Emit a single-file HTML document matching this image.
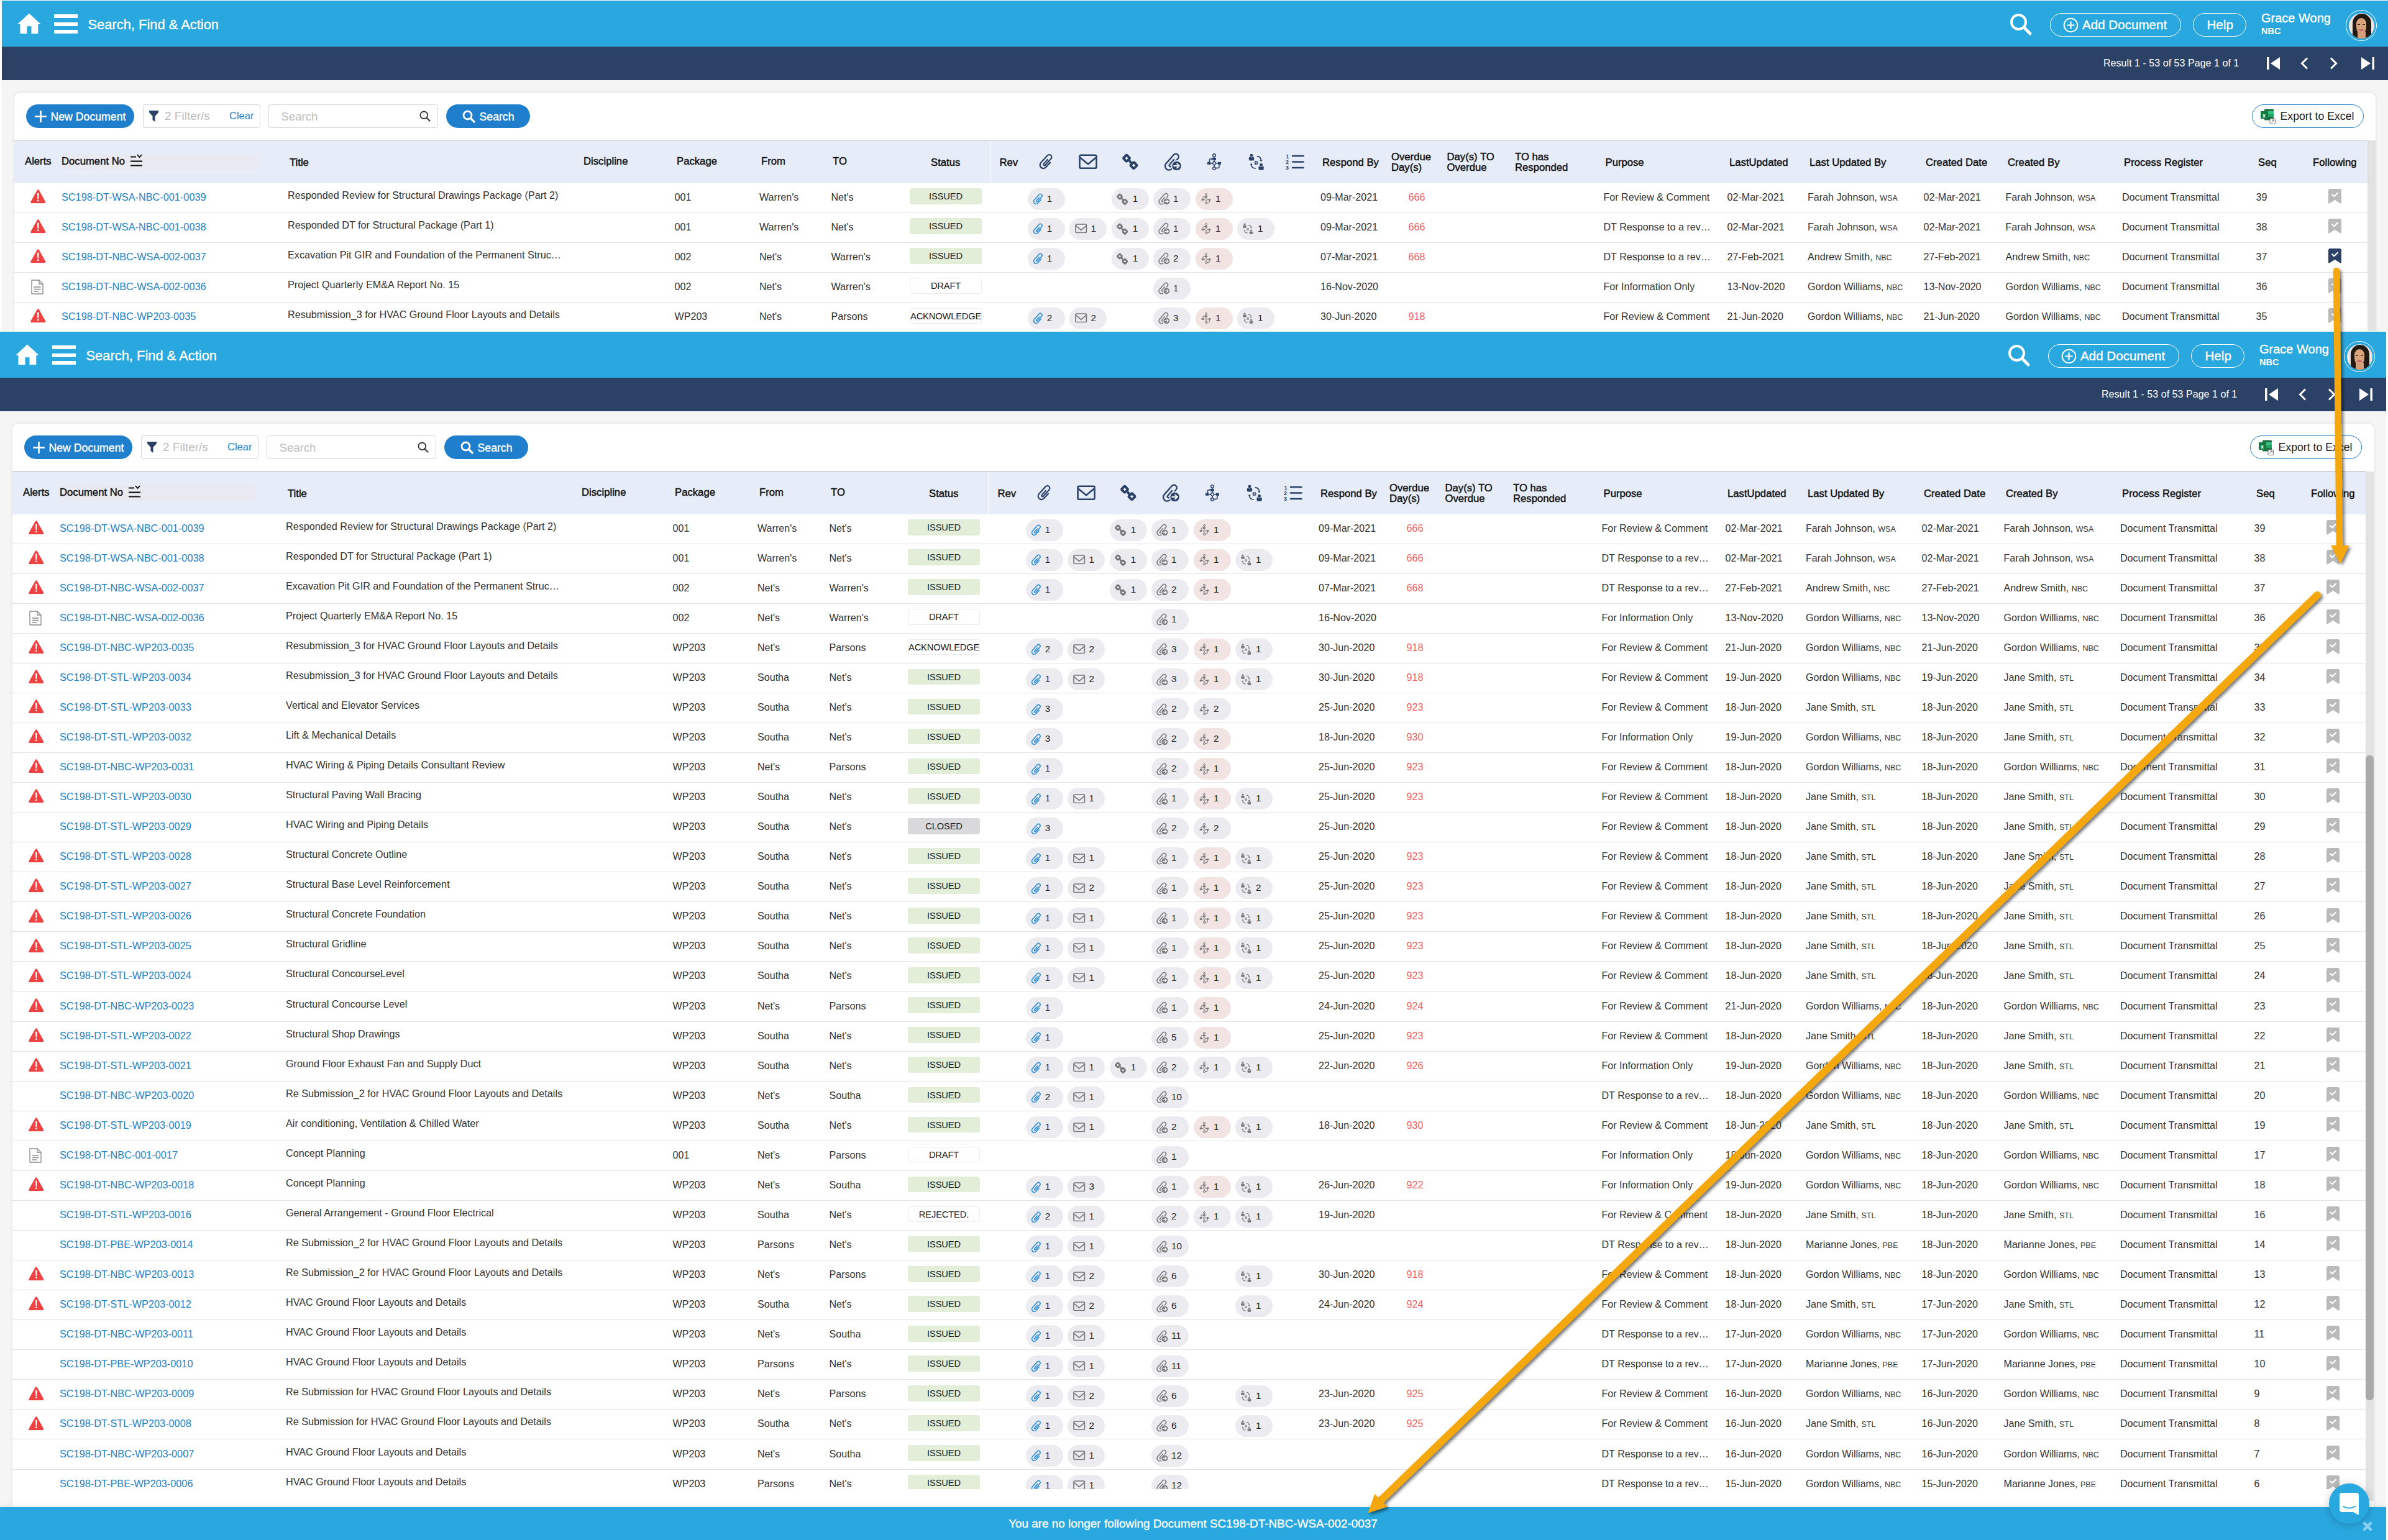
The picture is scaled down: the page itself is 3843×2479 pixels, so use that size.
<!DOCTYPE html>
<html><head><meta charset="utf-8"><title>Search, Find &amp; Action</title>
<style>
*{box-sizing:border-box}
html,body{margin:0;padding:0}
body{width:3843px;height:2479px;overflow:hidden;position:relative;background:#fff;font-family:"Liberation Sans", sans-serif;color:#333}
.scr{position:absolute;overflow:hidden;background:#F5F5F5;width:3840px}
.scr div,.scr span,.scr svg{position:absolute}
.scr svg{overflow:visible}
.t{white-space:nowrap}
.md{-webkit-text-stroke:0.35px currentColor}
.hdr{left:0;top:1px;width:3840px;height:74px;background:#29A8E0}
.nav{left:0;top:75px;width:3840px;height:54px;background:#2B4166}
.card{left:20px;top:149px;width:3800px;height:3000px;background:#fff;border-radius:9px;box-shadow:0 0 5px rgba(0,0,0,.10)}
.th{left:20px;top:225px;width:3787px;height:70px;background:#E6EDF9;border-top:1px solid #BDBDC4}
.hl{font-size:16.7px;font-weight:400;color:#111;line-height:17px;-webkit-text-stroke:0.45px #111}
.row{left:20px;width:3787px;height:48px;border-bottom:1px solid #E4E4E6;background:#fff}
.c{font-size:16.1px;line-height:20px;color:#333;white-space:nowrap}
.ti{font-size:16.2px}
.dn{color:#1E82C8;font-size:16.3px}
.org{font-size:12.5px}
.od{color:#F26262}
.st{width:116px;height:25.6px;border-radius:3.5px;font-size:14.7px;line-height:26px;text-align:center;color:#1a1a1a;letter-spacing:-0.15px}
.iss{background:#E2EED8}
.dr{background:#fff;border:1px solid #EBEBEB;line-height:24px}
.cl{background:#D9D9DC}
.pill{width:60px;height:35px;border-radius:17.5px;background:#EBEBF0}
.pk{background:#F3E4E4}
.pill svg{left:8px;top:8.5px;width:18px;height:18px;color:#777}
.pill .n{left:31.5px;top:7px;font-size:15.2px;line-height:20px;color:#222}
.hi{color:#2B4268}
</style></head><body>

<svg width="0" height="0" style="position:absolute">
<defs>
<symbol id="clip" viewBox="-11 -12.5 22 25" overflow="visible"><g transform="rotate(42)" fill="none" stroke="currentColor" stroke-width="2.2" stroke-linecap="round" stroke-linejoin="round"><path d="M5.8 -2.3 L5.8 7.9 A5.4 5.4 0 0 1 -5 7.9 L-5 -7.9 A3.9 3.9 0 0 1 2.8 -7.9 L2.8 5.9 A1.6 1.6 0 0 1 -0.4 5.9 L-0.4 -3"/></g></symbol>
<symbol id="mail" viewBox="0 0 30 24"><g fill="none" stroke="currentColor" stroke-width="2.6" stroke-linejoin="round"><rect x="1.5" y="1.5" width="27" height="21" rx="2"/><polyline points="2.5,5.5 15,16 27.5,5.5"/></g></symbol>
<symbol id="link" viewBox="0 0 25 25" overflow="visible"><g fill="currentColor"><rect x="1.2" y="1.9" width="11.6" height="11.6" rx="3.6" transform="rotate(45 7 7.7)"/><rect x="12.7" y="13.4" width="11.6" height="11.6" rx="3.6" transform="rotate(45 18.5 19.2)"/><path d="M10 12.8 L12.8 10 L15.8 14.2 L13 17 Z"/></g><g fill="#fff"><rect x="5.25" y="5.95" width="3.5" height="3.5" transform="rotate(45 7 7.7)"/><rect x="16.75" y="17.45" width="3.5" height="3.5" transform="rotate(45 18.5 19.2)"/></g></symbol>
<symbol id="aa" viewBox="0 0 27 27" overflow="visible"><mask id="aam" maskUnits="userSpaceOnUse" x="-5" y="-5" width="40" height="40"><rect x="-5" y="-5" width="40" height="40" fill="#fff"/><circle cx="20.1" cy="20" r="9" fill="#000"/></mask><g mask="url(#aam)"><g transform="translate(13.6 13.05) rotate(41.3) scale(1.17)" fill="none" stroke="currentColor" stroke-width="2" stroke-linecap="round" stroke-linejoin="round"><path d="M5.8 -2.3 L5.8 7.9 A5.4 5.4 0 0 1 -5 7.9 L-5 -7.9 A3.9 3.9 0 0 1 2.8 -7.9 L2.8 5.9 A1.6 1.6 0 0 1 -0.4 5.9 L-0.4 -3"/></g></g><circle cx="20.1" cy="20" r="7.3" fill="currentColor"/><g fill="none" stroke="#fff" stroke-width="1.8" stroke-linecap="round" stroke-linejoin="round"><path d="M15.6 20 H24.4 M20.5 16.5 L24.4 20 L20.5 23.5"/></g></symbol>
<symbol id="wf" viewBox="0 0 22 27" overflow="visible"><g fill="none" stroke="currentColor" stroke-width="1.5"><circle cx="11" cy="3" r="2.3"/><circle cx="11" cy="24" r="2.3"/><path d="M11 12.6 L14.2 15.8 L11 19 L7.8 15.8 Z"/><path d="M11 5.3 V7 M11 10.7 V12.6 M11 19 V21.7 M7.8 15.8 H5 M14.2 15.8 H17 M3.5 14 V10.5 Q3.5 8.8 5.2 8.8 H6.5 M19 17.5 V21.5 Q19 23.5 17 23.5 H15"/></g><g fill="currentColor"><rect x="8" y="6.8" width="6" height="4"/><rect x="0" y="13.8" width="5.2" height="4"/><rect x="16.8" y="13.8" width="5.2" height="4"/><path d="M6.3 7 L8.3 8.8 L6.3 10.6 Z"/><path d="M15.5 21.7 L13.5 23.5 L15.5 25.3 Z"/></g></symbol>
<symbol id="ppl" viewBox="0 0 25 27" overflow="visible"><g fill="currentColor"><path d="M0.7 7.6 Q0.7 5.4 2.8 5.2 L7.2 5.2 Q9.3 5.4 9.3 7.6 L8.9 10.6 Q8.6 11.6 7.4 11.6 H2.6 Q1.4 11.6 1.1 10.6 Z"/><path d="M16.3 22.7 Q16.3 20.5 18.4 20.3 L22.8 20.3 Q24.9 20.5 24.9 22.7 L24.5 25.8 Q24.2 26.8 23 26.8 H18.2 Q17 26.8 16.7 25.8 Z"/></g><circle cx="4.95" cy="3.1" r="2.9" fill="currentColor" stroke="#fff" stroke-width="0.9" stroke-opacity=".85"/><circle cx="20.6" cy="18.4" r="2.9" fill="currentColor" stroke="#fff" stroke-width="0.9" stroke-opacity=".85"/><circle cx="12.6" cy="15" r="3.1" fill="currentColor"/><path d="M12.6 12.2 V17.8 M9.8 15 H15.4" stroke="#fff" stroke-width="0.8" opacity=".8"/><g fill="none" stroke="currentColor" stroke-width="1.6" stroke-linecap="round"><path d="M14.4 4.9 Q20 5 20.5 11.5"/><path d="M11.3 24 Q5 23.8 4.7 17.8"/></g><g fill="currentColor"><path d="M18.2 10.6 H22.6 L20.4 13.4 Z"/><path d="M2.5 18.6 H6.9 L4.7 15.6 Z"/></g></symbol>
<symbol id="nlist" viewBox="0 0 30 26"><g fill="currentColor" font-family="Liberation Sans" font-weight="700" font-size="9"><text x="0.5" y="8">1</text><text x="0" y="17">2</text><text x="0" y="26">3</text></g><g stroke="currentColor" stroke-width="2.6" stroke-linecap="round"><path d="M11 4 H28.5 M11 13.5 H28.5 M11 23 H28.5"/></g></symbol>
<symbol id="alert" viewBox="0 0 24.5 22.5"><path d="M12.25 0.3 Q13.3 0.3 13.9 1.4 L24 19.6 Q24.9 22.2 22.6 22.2 H1.9 Q-0.4 22.2 0.5 19.6 L10.6 1.4 Q11.2 0.3 12.25 0.3 Z" fill="#EF4343"/><path d="M11 6.5 Q11 5.4 12.25 5.4 Q13.5 5.4 13.5 6.5 L13.2 14.6 Q13.1 15.3 12.25 15.3 Q11.4 15.3 11.3 14.6 Z" fill="#fff"/><rect x="11" y="16.6" width="2.5" height="2.4" rx="0.6" fill="#fff"/></symbol>
<symbol id="doc" viewBox="0 0 20 24"><g fill="none" stroke="#8a8a8a" stroke-width="1.3"><path d="M1 1 H13 L19 7 V23 H1 Z"/><path d="M13 1 V7 H19"/><path d="M4.5 12 H15.5 M4.5 15.5 H15.5 M4.5 19 H12"/></g></symbol>
<symbol id="bm" viewBox="0 0 21 24"><path d="M3 0 H18 Q21 0 21 3 V22 Q21 24.5 18.8 23.2 L10.5 17.8 L2.2 23.2 Q0 24.5 0 22 V3 Q0 0 3 0 Z" fill="currentColor"/><polyline points="6.2,9.4 9.3,12.2 14.9,6.8" fill="none" stroke="#fff" stroke-width="2.2" stroke-linecap="round" stroke-linejoin="round"/></symbol>
<symbol id="house" viewBox="0 0 38 33"><path d="M18.9 0 L37.7 17.4 H33.3 V33 H22.5 V20.8 H15.4 V33 H4.4 V17.4 H0 Z" fill="#fff"/></symbol>
</defs></svg>
<div class="scr" style="left:3px;top:0px;height:533px">
<div class="hdr">
<svg style="left:24.5px;top:20px;width:38px;height:34px" viewBox="0 0 38 33"><use href="#house"/></svg>
<div style="left:84px;top:22px;width:38px;height:5.9px;background:#fff"></div>
<div style="left:84px;top:34.9px;width:38px;height:5.9px;background:#fff"></div>
<div style="left:84px;top:47.3px;width:38px;height:5.9px;background:#fff"></div>
<span class="t md" style="left:138.5px;top:25px;font-size:21.9px;line-height:28px;color:#fff">Search, Find &amp; Action</span>
<svg style="left:3231px;top:20px;width:37px;height:37px" viewBox="0 0 37 37"><circle cx="14.5" cy="14.5" r="11.5" fill="none" stroke="#fff" stroke-width="4"/><path d="M23 23 L33 33" stroke="#fff" stroke-width="5" stroke-linecap="round"/></svg>
<div style="left:3296px;top:20px;width:211px;height:38px;border:1.6px solid #fff;border-radius:19px"></div>
<svg style="left:3317px;top:27px;width:25px;height:25px" viewBox="0 0 25 25"><circle cx="12.5" cy="12.5" r="10.8" fill="none" stroke="#fff" stroke-width="2"/><path d="M12.5 6.5 V18.5 M6.5 12.5 H18.5" stroke="#fff" stroke-width="2.2"/></svg>
<span class="t md" style="left:3348px;top:26px;font-size:20.6px;line-height:26px;color:#fff">Add Document</span>
<div style="left:3526px;top:20px;width:86px;height:38px;border:1.6px solid #fff;border-radius:19px"></div>
<span class="t md" style="left:3548.5px;top:26px;font-size:20.6px;line-height:26px;color:#fff">Help</span>
<span class="t md" style="left:3636px;top:16px;font-size:20px;line-height:24px;color:#fff">Grace Wong</span>
<span class="t" style="left:3636px;top:41px;font-size:14.5px;line-height:16px;font-weight:700;color:#fff">NBC</span>
<div style="left:3772px;top:15px;width:50px;height:50px;border-radius:25px;border:1.5px solid #fff"></div>
<div style="left:3776.5px;top:19.5px;width:41px;height:41px;border-radius:21px;overflow:hidden;background:#EFE6E4"><div style="left:6px;top:1px;width:30px;height:46px;border-radius:15px 15px 4px 4px;background:#221913"></div><div style="left:12.5px;top:8px;width:16px;height:26px;border-radius:8px 8px 8px 8px / 9px 9px 12px 12px;background:#D8A47E"></div><div style="left:14px;top:30px;width:13px;height:14px;background:#D4A07A"></div><div style="left:14.5px;top:18px;width:4px;height:1.6px;background:#3a2a20"></div><div style="left:22.5px;top:18px;width:4px;height:1.6px;background:#3a2a20"></div><div style="left:16.5px;top:26.5px;width:8px;height:2.5px;border-radius:2px;background:#C46A6A"></div></div>
</div>
<div class="nav">
<span class="t" style="left:3382px;top:16px;font-size:16.1px;line-height:20px;color:#fff">Result 1 - 53 of 53 Page 1 of 1</span>
<svg style="left:3645px;top:17px;width:22px;height:20px" viewBox="0 0 22 20"><rect x="0" y="0" width="3.5" height="20" fill="#fff"/><path d="M21 0 V20 L6 10 Z" fill="#fff"/></svg>
<svg style="left:3698px;top:17px;width:15px;height:20px" viewBox="0 0 15 20"><path d="M12 1.5 L3.5 10 L12 18.5" fill="none" stroke="#fff" stroke-width="3"/></svg>
<svg style="left:3745px;top:17px;width:15px;height:20px" viewBox="0 0 15 20"><path d="M3 1.5 L11.5 10 L3 18.5" fill="none" stroke="#fff" stroke-width="3"/></svg>
<svg style="left:3796px;top:17px;width:22px;height:20px" viewBox="0 0 22 20"><path d="M1 0 V20 L16 10 Z" fill="#fff"/><rect x="18.5" y="0" width="3.5" height="20" fill="#fff"/></svg>
</div>
<div class="card"></div>
<div style="left:39px;top:168px;width:174px;height:38px;border-radius:19px;background:#1F7FCC"></div>
<svg style="left:52px;top:177px;width:21px;height:21px" viewBox="0 0 21 21"><path d="M10.5 1 V20 M1 10.5 H20" stroke="#fff" stroke-width="2.6"/></svg>
<span class="t md" style="left:78.5px;top:177px;font-size:17.7px;line-height:22px;color:#fff">New Document</span>
<div style="left:227px;top:168px;width:189px;height:38px;border-radius:4px;border:1px solid #D6D6D6;background:#fff"></div>
<svg style="left:237px;top:178px;width:15px;height:18px" viewBox="0 0 15 18"><path d="M0 0 H15 V3 L9.5 9 V18 L5.5 15 V9 L0 3 Z" fill="#2B4166"/></svg>
<span class="t" style="left:262px;top:176px;font-size:19px;line-height:22px;color:#BDBDBD">2 Filter/s</span>
<span class="t" style="left:366px;top:175px;font-size:16.5px;line-height:22px;color:#1E82C8">Clear</span>
<div style="left:429px;top:168px;width:273px;height:38px;border-radius:4px;border:1px solid #D6D6D6;background:#fff"></div>
<span class="t" style="left:449.5px;top:176.5px;font-size:18.6px;line-height:22px;color:#BDBDBD">Search</span>
<svg style="left:672px;top:178px;width:18px;height:18px" viewBox="0 0 18 18"><circle cx="7.3" cy="7.3" r="5.8" fill="none" stroke="#333" stroke-width="1.8"/><path d="M11.5 11.5 L16.5 16.5" stroke="#333" stroke-width="2.2" stroke-linecap="round"/></svg>
<div style="left:715px;top:168px;width:135px;height:38px;border-radius:19px;background:#1F7FCC"></div>
<svg style="left:741px;top:177px;width:21px;height:21px" viewBox="0 0 21 21"><circle cx="8.5" cy="8.5" r="6.5" fill="none" stroke="#fff" stroke-width="2.8"/><path d="M13.5 13.5 L19 19" stroke="#fff" stroke-width="3.2" stroke-linecap="round"/></svg>
<span class="t md" style="left:768.5px;top:177px;font-size:17.7px;line-height:22px;color:#fff">Search</span>
<div style="left:3621px;top:168px;width:180px;height:38px;border-radius:19px;border:1.5px solid #1F7FCC;background:#fff"></div>
<svg style="left:3635px;top:175px;width:24px;height:25px" viewBox="0 0 24 25"><rect x="6" y="0.5" width="15" height="18" rx="1.5" fill="#1E7145"/><rect x="12" y="4" width="9" height="4" fill="#33C481"/><rect x="12" y="8" width="9" height="5" fill="#21A366"/><rect x="0" y="4" width="12" height="12" rx="1.2" fill="#107C41"/><text x="3" y="13.5" font-size="9" font-family="Liberation Sans" font-weight="700" fill="#fff">x</text><rect x="15" y="16" width="8.5" height="8.5" rx="1.5" fill="#fff" stroke="#777" stroke-width="1"/><path d="M17.5 22 L21.5 18 M19 18 H21.5 V20.5" stroke="#555" stroke-width="1" fill="none"/></svg>
<span class="t" style="left:3666.5px;top:175.5px;font-size:17.7px;line-height:22px;color:#222">Export to Excel</span>
<div class="th"></div>
<div style="left:95.5px;top:248px;width:316px;height:24.5px;border-radius:6px;background:#E9E9F1"></div>
<div style="left:1590px;top:226px;width:1px;height:69px;background:#fff"></div>
<span class="t hl" style="left:37px;top:251px">Alerts</span>
<span class="t hl" style="left:96px;top:251px">Document No</span>
<span class="t hl" style="left:463px;top:253px">Title</span>
<span class="t hl" style="left:936px;top:251px">Discipline</span>
<span class="t hl" style="left:1086px;top:251px">Package</span>
<span class="t hl" style="left:1222px;top:251px">From</span>
<span class="t hl" style="left:1337px;top:251px">TO</span>
<span class="t hl" style="left:1495px;top:253px">Status</span>
<span class="t hl" style="left:1605.5px;top:253px">Rev</span>
<span class="t hl" style="left:2125px;top:253px">Respond By</span>
<span class="t hl" style="left:2580.5px;top:253px">Purpose</span>
<span class="t hl" style="left:2780px;top:253px">LastUpdated</span>
<span class="t hl" style="left:2909px;top:253px">Last Updated By</span>
<span class="t hl" style="left:3096px;top:253px">Created Date</span>
<span class="t hl" style="left:3228px;top:253px">Created By</span>
<span class="t hl" style="left:3415px;top:253px">Process Register</span>
<span class="t hl" style="left:3631px;top:253px">Seq</span>
<span class="t hl" style="left:3719px;top:253px">Following</span>
<span class="t hl" style="left:2236px;top:245.3px;line-height:16.3px">Overdue<br>Day(s)</span>
<span class="t hl" style="left:2325.5px;top:245.3px;line-height:16.3px">Day(s) TO<br>Overdue</span>
<span class="t hl" style="left:2435px;top:245.3px;line-height:16.3px">TO has<br>Responded</span>
<svg style="left:207px;top:246px;width:20px;height:22px" viewBox="0 0 20 22"><g stroke="#111" stroke-width="2.1" fill="none"><path d="M0 6.5 H9 M0 13.6 H19 M0 20.5 H19"/><path d="M11 3.2 L14.5 6.8 L18 3.2" stroke-width="1.9"/></g></svg>
<svg class="hi" style="left:1670px;top:247px;width:22px;height:25px"><use href="#clip"/></svg>
<svg class="hi" style="left:1733px;top:248px;width:30px;height:24.6px"><use href="#mail"/></svg>
<svg class="hi" style="left:1802.5px;top:247px;width:25px;height:25px"><use href="#link"/></svg>
<svg class="hi" style="left:1869.5px;top:246.5px;width:28px;height:27px"><use href="#aa"/></svg>
<svg class="hi" style="left:1940px;top:246.5px;width:22px;height:27px"><use href="#wf"/></svg>
<svg class="hi" style="left:2005.5px;top:246.5px;width:25px;height:27px"><use href="#ppl"/></svg>
<svg class="hi" style="left:2065.5px;top:247px;width:30px;height:26px"><use href="#nlist"/></svg>
<div style="left:3807px;top:226px;width:13px;height:1700px;background:#E2E2E2"></div>

<div class="row" style="top:294.5px"></div>
<svg style="left:45.9px;top:304.7px;width:24.6px;height:22.5px"><use href="#alert"/></svg>
<span class="c dn" style="left:96px;top:306.5px">SC198-DT-WSA-NBC-001-0039</span>
<span class="c ti" style="left:460px;top:303.5px">Responded Review for Structural Drawings Package (Part 2)</span>
<span class="c" style="left:1082.5px;top:306.5px">001</span>
<span class="c" style="left:1219px;top:306.5px">Warren's</span>
<span class="c" style="left:1334.5px;top:306.5px">Net's</span>
<span class="st iss" style="left:1461px;top:303.3px">ISSUED</span>
<div class="pill" style="left:1650.5px;top:302.7px"><svg style="color:#2D8FD9"><use href="#clip"/></svg><span class="n" style="left:31.3px">1</span></div>
<div class="pill" style="left:1785.5px;top:302.7px"><svg><use href="#link"/></svg><span class="n" style="left:34.2px">1</span></div>
<div class="pill" style="left:1853.0px;top:302.7px"><svg><use href="#aa"/></svg><span class="n" style="left:32px">1</span></div>
<div class="pill pk" style="left:1920.5px;top:302.7px"><svg><use href="#wf"/></svg><span class="n" style="left:32.4px">1</span></div>
<span class="c" style="left:2122px;top:306.5px">09-Mar-2021</span>
<span class="c od" style="left:2263.5px;top:306.5px">666</span>
<span class="c" style="left:2577.5px;top:306.5px">For Review &amp; Comment</span>
<span class="c" style="left:2776.5px;top:306.5px">02-Mar-2021</span>
<span class="c" style="left:2906px;top:306.5px">Farah Johnson, <span class="org" style="position:static">WSA</span></span>
<span class="c" style="left:3092.5px;top:306.5px">02-Mar-2021</span>
<span class="c" style="left:3224.5px;top:306.5px">Farah Johnson, <span class="org" style="position:static">WSA</span></span>
<span class="c" style="left:3412px;top:306.5px">Document Transmittal</span>
<span class="c" style="left:3627.5px;top:306.5px">39</span>
<svg style="left:3744px;top:303.7px;width:21px;height:24px;color:#BABABA"><use href="#bm"/></svg>
<div class="row" style="top:342.56px"></div>
<svg style="left:45.9px;top:352.76px;width:24.6px;height:22.5px"><use href="#alert"/></svg>
<span class="c dn" style="left:96px;top:354.56px">SC198-DT-WSA-NBC-001-0038</span>
<span class="c ti" style="left:460px;top:351.56px">Responded DT for Structural Package (Part 1)</span>
<span class="c" style="left:1082.5px;top:354.56px">001</span>
<span class="c" style="left:1219px;top:354.56px">Warren's</span>
<span class="c" style="left:1334.5px;top:354.56px">Net's</span>
<span class="st iss" style="left:1461px;top:351.36px">ISSUED</span>
<div class="pill" style="left:1650.5px;top:350.76px"><svg style="color:#2D8FD9"><use href="#clip"/></svg><span class="n" style="left:31.3px">1</span></div>
<div class="pill" style="left:1718.0px;top:350.76px"><svg style="left:8.5px;top:9.5px;width:19.5px;height:15.5px"><use href="#mail"/></svg><span class="n" style="left:34.5px">1</span></div>
<div class="pill" style="left:1785.5px;top:350.76px"><svg><use href="#link"/></svg><span class="n" style="left:34.2px">1</span></div>
<div class="pill" style="left:1853.0px;top:350.76px"><svg><use href="#aa"/></svg><span class="n" style="left:32px">1</span></div>
<div class="pill pk" style="left:1920.5px;top:350.76px"><svg><use href="#wf"/></svg><span class="n" style="left:32.4px">1</span></div>
<div class="pill" style="left:1988.0px;top:350.76px"><svg><use href="#ppl"/></svg><span class="n" style="left:32.9px">1</span></div>
<span class="c" style="left:2122px;top:354.56px">09-Mar-2021</span>
<span class="c od" style="left:2263.5px;top:354.56px">666</span>
<span class="c" style="left:2577.5px;top:354.56px">DT Response to a rev&#8230;</span>
<span class="c" style="left:2776.5px;top:354.56px">02-Mar-2021</span>
<span class="c" style="left:2906px;top:354.56px">Farah Johnson, <span class="org" style="position:static">WSA</span></span>
<span class="c" style="left:3092.5px;top:354.56px">02-Mar-2021</span>
<span class="c" style="left:3224.5px;top:354.56px">Farah Johnson, <span class="org" style="position:static">WSA</span></span>
<span class="c" style="left:3412px;top:354.56px">Document Transmittal</span>
<span class="c" style="left:3627.5px;top:354.56px">38</span>
<svg style="left:3744px;top:351.76px;width:21px;height:24px;color:#BABABA"><use href="#bm"/></svg>
<div class="row" style="top:390.63px"></div>
<svg style="left:45.9px;top:400.83px;width:24.6px;height:22.5px"><use href="#alert"/></svg>
<span class="c dn" style="left:96px;top:402.63px">SC198-DT-NBC-WSA-002-0037</span>
<span class="c ti" style="left:460px;top:399.63px">Excavation Pit GIR and Foundation of the Permanent Struc&#8230;</span>
<span class="c" style="left:1082.5px;top:402.63px">002</span>
<span class="c" style="left:1219px;top:402.63px">Net's</span>
<span class="c" style="left:1334.5px;top:402.63px">Warren's</span>
<span class="st iss" style="left:1461px;top:399.43px">ISSUED</span>
<div class="pill" style="left:1650.5px;top:398.83px"><svg style="color:#2D8FD9"><use href="#clip"/></svg><span class="n" style="left:31.3px">1</span></div>
<div class="pill" style="left:1785.5px;top:398.83px"><svg><use href="#link"/></svg><span class="n" style="left:34.2px">1</span></div>
<div class="pill" style="left:1853.0px;top:398.83px"><svg><use href="#aa"/></svg><span class="n" style="left:32px">2</span></div>
<div class="pill pk" style="left:1920.5px;top:398.83px"><svg><use href="#wf"/></svg><span class="n" style="left:32.4px">1</span></div>
<span class="c" style="left:2122px;top:402.63px">07-Mar-2021</span>
<span class="c od" style="left:2263.5px;top:402.63px">668</span>
<span class="c" style="left:2577.5px;top:402.63px">DT Response to a rev&#8230;</span>
<span class="c" style="left:2776.5px;top:402.63px">27-Feb-2021</span>
<span class="c" style="left:2906px;top:402.63px">Andrew Smith, <span class="org" style="position:static">NBC</span></span>
<span class="c" style="left:3092.5px;top:402.63px">27-Feb-2021</span>
<span class="c" style="left:3224.5px;top:402.63px">Andrew Smith, <span class="org" style="position:static">NBC</span></span>
<span class="c" style="left:3412px;top:402.63px">Document Transmittal</span>
<span class="c" style="left:3627.5px;top:402.63px">37</span>
<svg style="left:3744px;top:399.83px;width:21px;height:24px;color:#2B4166"><use href="#bm"/></svg>
<div class="row" style="top:438.69px"></div>
<svg style="left:47px;top:449.69px;width:20px;height:24px"><use href="#doc"/></svg>
<span class="c dn" style="left:96px;top:450.69px">SC198-DT-NBC-WSA-002-0036</span>
<span class="c ti" style="left:460px;top:447.69px">Project Quarterly EM&amp;A Report No. 15</span>
<span class="c" style="left:1082.5px;top:450.69px">002</span>
<span class="c" style="left:1219px;top:450.69px">Net's</span>
<span class="c" style="left:1334.5px;top:450.69px">Warren's</span>
<span class="st dr" style="left:1461px;top:447.49px">DRAFT</span>
<div class="pill" style="left:1853.0px;top:446.89px"><svg><use href="#aa"/></svg><span class="n" style="left:32px">1</span></div>
<span class="c" style="left:2122px;top:450.69px">16-Nov-2020</span>
<span class="c" style="left:2577.5px;top:450.69px">For Information Only</span>
<span class="c" style="left:2776.5px;top:450.69px">13-Nov-2020</span>
<span class="c" style="left:2906px;top:450.69px">Gordon Williams, <span class="org" style="position:static">NBC</span></span>
<span class="c" style="left:3092.5px;top:450.69px">13-Nov-2020</span>
<span class="c" style="left:3224.5px;top:450.69px">Gordon Williams, <span class="org" style="position:static">NBC</span></span>
<span class="c" style="left:3412px;top:450.69px">Document Transmittal</span>
<span class="c" style="left:3627.5px;top:450.69px">36</span>
<svg style="left:3744px;top:447.89px;width:21px;height:24px;color:#BABABA"><use href="#bm"/></svg>
<div class="row" style="top:486.76px"></div>
<svg style="left:45.9px;top:496.96px;width:24.6px;height:22.5px"><use href="#alert"/></svg>
<span class="c dn" style="left:96px;top:498.76px">SC198-DT-NBC-WP203-0035</span>
<span class="c ti" style="left:460px;top:495.76px">Resubmission_3 for HVAC Ground Floor Layouts and Details</span>
<span class="c" style="left:1082.5px;top:498.76px">WP203</span>
<span class="c" style="left:1219px;top:498.76px">Net's</span>
<span class="c" style="left:1334.5px;top:498.76px">Parsons</span>
<span class="st dr" style="left:1461px;top:495.56px">ACKNOWLEDGE</span>
<div class="pill" style="left:1650.5px;top:494.96px"><svg style="color:#2D8FD9"><use href="#clip"/></svg><span class="n" style="left:31.3px">2</span></div>
<div class="pill" style="left:1718.0px;top:494.96px"><svg style="left:8.5px;top:9.5px;width:19.5px;height:15.5px"><use href="#mail"/></svg><span class="n" style="left:34.5px">2</span></div>
<div class="pill" style="left:1853.0px;top:494.96px"><svg><use href="#aa"/></svg><span class="n" style="left:32px">3</span></div>
<div class="pill pk" style="left:1920.5px;top:494.96px"><svg><use href="#wf"/></svg><span class="n" style="left:32.4px">1</span></div>
<div class="pill" style="left:1988.0px;top:494.96px"><svg><use href="#ppl"/></svg><span class="n" style="left:32.9px">1</span></div>
<span class="c" style="left:2122px;top:498.76px">30-Jun-2020</span>
<span class="c od" style="left:2263.5px;top:498.76px">918</span>
<span class="c" style="left:2577.5px;top:498.76px">For Review &amp; Comment</span>
<span class="c" style="left:2776.5px;top:498.76px">21-Jun-2020</span>
<span class="c" style="left:2906px;top:498.76px">Gordon Williams, <span class="org" style="position:static">NBC</span></span>
<span class="c" style="left:3092.5px;top:498.76px">21-Jun-2020</span>
<span class="c" style="left:3224.5px;top:498.76px">Gordon Williams, <span class="org" style="position:static">NBC</span></span>
<span class="c" style="left:3412px;top:498.76px">Document Transmittal</span>
<span class="c" style="left:3627.5px;top:498.76px">35</span>
<svg style="left:3744px;top:495.96px;width:21px;height:24px;color:#BABABA"><use href="#bm"/></svg>
</div>
<div class="scr" style="left:0px;top:533px;height:1946px">
<div class="hdr">
<svg style="left:24.5px;top:20px;width:38px;height:34px" viewBox="0 0 38 33"><use href="#house"/></svg>
<div style="left:84px;top:22px;width:38px;height:5.9px;background:#fff"></div>
<div style="left:84px;top:34.9px;width:38px;height:5.9px;background:#fff"></div>
<div style="left:84px;top:47.3px;width:38px;height:5.9px;background:#fff"></div>
<span class="t md" style="left:138.5px;top:25px;font-size:21.9px;line-height:28px;color:#fff">Search, Find &amp; Action</span>
<svg style="left:3231px;top:20px;width:37px;height:37px" viewBox="0 0 37 37"><circle cx="14.5" cy="14.5" r="11.5" fill="none" stroke="#fff" stroke-width="4"/><path d="M23 23 L33 33" stroke="#fff" stroke-width="5" stroke-linecap="round"/></svg>
<div style="left:3296px;top:20px;width:211px;height:38px;border:1.6px solid #fff;border-radius:19px"></div>
<svg style="left:3317px;top:27px;width:25px;height:25px" viewBox="0 0 25 25"><circle cx="12.5" cy="12.5" r="10.8" fill="none" stroke="#fff" stroke-width="2"/><path d="M12.5 6.5 V18.5 M6.5 12.5 H18.5" stroke="#fff" stroke-width="2.2"/></svg>
<span class="t md" style="left:3348px;top:26px;font-size:20.6px;line-height:26px;color:#fff">Add Document</span>
<div style="left:3526px;top:20px;width:86px;height:38px;border:1.6px solid #fff;border-radius:19px"></div>
<span class="t md" style="left:3548.5px;top:26px;font-size:20.6px;line-height:26px;color:#fff">Help</span>
<span class="t md" style="left:3636px;top:16px;font-size:20px;line-height:24px;color:#fff">Grace Wong</span>
<span class="t" style="left:3636px;top:41px;font-size:14.5px;line-height:16px;font-weight:700;color:#fff">NBC</span>
<div style="left:3772px;top:15px;width:50px;height:50px;border-radius:25px;border:1.5px solid #fff"></div>
<div style="left:3776.5px;top:19.5px;width:41px;height:41px;border-radius:21px;overflow:hidden;background:#EFE6E4"><div style="left:6px;top:1px;width:30px;height:46px;border-radius:15px 15px 4px 4px;background:#221913"></div><div style="left:12.5px;top:8px;width:16px;height:26px;border-radius:8px 8px 8px 8px / 9px 9px 12px 12px;background:#D8A47E"></div><div style="left:14px;top:30px;width:13px;height:14px;background:#D4A07A"></div><div style="left:14.5px;top:18px;width:4px;height:1.6px;background:#3a2a20"></div><div style="left:22.5px;top:18px;width:4px;height:1.6px;background:#3a2a20"></div><div style="left:16.5px;top:26.5px;width:8px;height:2.5px;border-radius:2px;background:#C46A6A"></div></div>
</div>
<div class="nav">
<span class="t" style="left:3382px;top:16px;font-size:16.1px;line-height:20px;color:#fff">Result 1 - 53 of 53 Page 1 of 1</span>
<svg style="left:3645px;top:17px;width:22px;height:20px" viewBox="0 0 22 20"><rect x="0" y="0" width="3.5" height="20" fill="#fff"/><path d="M21 0 V20 L6 10 Z" fill="#fff"/></svg>
<svg style="left:3698px;top:17px;width:15px;height:20px" viewBox="0 0 15 20"><path d="M12 1.5 L3.5 10 L12 18.5" fill="none" stroke="#fff" stroke-width="3"/></svg>
<svg style="left:3745px;top:17px;width:15px;height:20px" viewBox="0 0 15 20"><path d="M3 1.5 L11.5 10 L3 18.5" fill="none" stroke="#fff" stroke-width="3"/></svg>
<svg style="left:3796px;top:17px;width:22px;height:20px" viewBox="0 0 22 20"><path d="M1 0 V20 L16 10 Z" fill="#fff"/><rect x="18.5" y="0" width="3.5" height="20" fill="#fff"/></svg>
</div>
<div class="card"></div>
<div style="left:39px;top:168px;width:174px;height:38px;border-radius:19px;background:#1F7FCC"></div>
<svg style="left:52px;top:177px;width:21px;height:21px" viewBox="0 0 21 21"><path d="M10.5 1 V20 M1 10.5 H20" stroke="#fff" stroke-width="2.6"/></svg>
<span class="t md" style="left:78.5px;top:177px;font-size:17.7px;line-height:22px;color:#fff">New Document</span>
<div style="left:227px;top:168px;width:189px;height:38px;border-radius:4px;border:1px solid #D6D6D6;background:#fff"></div>
<svg style="left:237px;top:178px;width:15px;height:18px" viewBox="0 0 15 18"><path d="M0 0 H15 V3 L9.5 9 V18 L5.5 15 V9 L0 3 Z" fill="#2B4166"/></svg>
<span class="t" style="left:262px;top:176px;font-size:19px;line-height:22px;color:#BDBDBD">2 Filter/s</span>
<span class="t" style="left:366px;top:175px;font-size:16.5px;line-height:22px;color:#1E82C8">Clear</span>
<div style="left:429px;top:168px;width:273px;height:38px;border-radius:4px;border:1px solid #D6D6D6;background:#fff"></div>
<span class="t" style="left:449.5px;top:176.5px;font-size:18.6px;line-height:22px;color:#BDBDBD">Search</span>
<svg style="left:672px;top:178px;width:18px;height:18px" viewBox="0 0 18 18"><circle cx="7.3" cy="7.3" r="5.8" fill="none" stroke="#333" stroke-width="1.8"/><path d="M11.5 11.5 L16.5 16.5" stroke="#333" stroke-width="2.2" stroke-linecap="round"/></svg>
<div style="left:715px;top:168px;width:135px;height:38px;border-radius:19px;background:#1F7FCC"></div>
<svg style="left:741px;top:177px;width:21px;height:21px" viewBox="0 0 21 21"><circle cx="8.5" cy="8.5" r="6.5" fill="none" stroke="#fff" stroke-width="2.8"/><path d="M13.5 13.5 L19 19" stroke="#fff" stroke-width="3.2" stroke-linecap="round"/></svg>
<span class="t md" style="left:768.5px;top:177px;font-size:17.7px;line-height:22px;color:#fff">Search</span>
<div style="left:3621px;top:168px;width:180px;height:38px;border-radius:19px;border:1.5px solid #1F7FCC;background:#fff"></div>
<svg style="left:3635px;top:175px;width:24px;height:25px" viewBox="0 0 24 25"><rect x="6" y="0.5" width="15" height="18" rx="1.5" fill="#1E7145"/><rect x="12" y="4" width="9" height="4" fill="#33C481"/><rect x="12" y="8" width="9" height="5" fill="#21A366"/><rect x="0" y="4" width="12" height="12" rx="1.2" fill="#107C41"/><text x="3" y="13.5" font-size="9" font-family="Liberation Sans" font-weight="700" fill="#fff">x</text><rect x="15" y="16" width="8.5" height="8.5" rx="1.5" fill="#fff" stroke="#777" stroke-width="1"/><path d="M17.5 22 L21.5 18 M19 18 H21.5 V20.5" stroke="#555" stroke-width="1" fill="none"/></svg>
<span class="t" style="left:3666.5px;top:175.5px;font-size:17.7px;line-height:22px;color:#222">Export to Excel</span>
<div class="th"></div>
<div style="left:95.5px;top:248px;width:316px;height:24.5px;border-radius:6px;background:#E9E9F1"></div>
<div style="left:1590px;top:226px;width:1px;height:69px;background:#fff"></div>
<span class="t hl" style="left:37px;top:251px">Alerts</span>
<span class="t hl" style="left:96px;top:251px">Document No</span>
<span class="t hl" style="left:463px;top:253px">Title</span>
<span class="t hl" style="left:936px;top:251px">Discipline</span>
<span class="t hl" style="left:1086px;top:251px">Package</span>
<span class="t hl" style="left:1222px;top:251px">From</span>
<span class="t hl" style="left:1337px;top:251px">TO</span>
<span class="t hl" style="left:1495px;top:253px">Status</span>
<span class="t hl" style="left:1605.5px;top:253px">Rev</span>
<span class="t hl" style="left:2125px;top:253px">Respond By</span>
<span class="t hl" style="left:2580.5px;top:253px">Purpose</span>
<span class="t hl" style="left:2780px;top:253px">LastUpdated</span>
<span class="t hl" style="left:2909px;top:253px">Last Updated By</span>
<span class="t hl" style="left:3096px;top:253px">Created Date</span>
<span class="t hl" style="left:3228px;top:253px">Created By</span>
<span class="t hl" style="left:3415px;top:253px">Process Register</span>
<span class="t hl" style="left:3631px;top:253px">Seq</span>
<span class="t hl" style="left:3719px;top:253px">Following</span>
<span class="t hl" style="left:2236px;top:245.3px;line-height:16.3px">Overdue<br>Day(s)</span>
<span class="t hl" style="left:2325.5px;top:245.3px;line-height:16.3px">Day(s) TO<br>Overdue</span>
<span class="t hl" style="left:2435px;top:245.3px;line-height:16.3px">TO has<br>Responded</span>
<svg style="left:207px;top:246px;width:20px;height:22px" viewBox="0 0 20 22"><g stroke="#111" stroke-width="2.1" fill="none"><path d="M0 6.5 H9 M0 13.6 H19 M0 20.5 H19"/><path d="M11 3.2 L14.5 6.8 L18 3.2" stroke-width="1.9"/></g></svg>
<svg class="hi" style="left:1670px;top:247px;width:22px;height:25px"><use href="#clip"/></svg>
<svg class="hi" style="left:1733px;top:248px;width:30px;height:24.6px"><use href="#mail"/></svg>
<svg class="hi" style="left:1802.5px;top:247px;width:25px;height:25px"><use href="#link"/></svg>
<svg class="hi" style="left:1869.5px;top:246.5px;width:28px;height:27px"><use href="#aa"/></svg>
<svg class="hi" style="left:1940px;top:246.5px;width:22px;height:27px"><use href="#wf"/></svg>
<svg class="hi" style="left:2005.5px;top:246.5px;width:25px;height:27px"><use href="#ppl"/></svg>
<svg class="hi" style="left:2065.5px;top:247px;width:30px;height:26px"><use href="#nlist"/></svg>
<div style="left:3807px;top:226px;width:13px;height:1700px;background:#E2E2E2"></div>

<div class="row" style="top:294.5px"></div>
<svg style="left:45.9px;top:304.7px;width:24.6px;height:22.5px"><use href="#alert"/></svg>
<span class="c dn" style="left:96px;top:306.5px">SC198-DT-WSA-NBC-001-0039</span>
<span class="c ti" style="left:460px;top:303.5px">Responded Review for Structural Drawings Package (Part 2)</span>
<span class="c" style="left:1082.5px;top:306.5px">001</span>
<span class="c" style="left:1219px;top:306.5px">Warren's</span>
<span class="c" style="left:1334.5px;top:306.5px">Net's</span>
<span class="st iss" style="left:1461px;top:303.3px">ISSUED</span>
<div class="pill" style="left:1650.5px;top:302.7px"><svg style="color:#2D8FD9"><use href="#clip"/></svg><span class="n" style="left:31.3px">1</span></div>
<div class="pill" style="left:1785.5px;top:302.7px"><svg><use href="#link"/></svg><span class="n" style="left:34.2px">1</span></div>
<div class="pill" style="left:1853.0px;top:302.7px"><svg><use href="#aa"/></svg><span class="n" style="left:32px">1</span></div>
<div class="pill pk" style="left:1920.5px;top:302.7px"><svg><use href="#wf"/></svg><span class="n" style="left:32.4px">1</span></div>
<span class="c" style="left:2122px;top:306.5px">09-Mar-2021</span>
<span class="c od" style="left:2263.5px;top:306.5px">666</span>
<span class="c" style="left:2577.5px;top:306.5px">For Review &amp; Comment</span>
<span class="c" style="left:2776.5px;top:306.5px">02-Mar-2021</span>
<span class="c" style="left:2906px;top:306.5px">Farah Johnson, <span class="org" style="position:static">WSA</span></span>
<span class="c" style="left:3092.5px;top:306.5px">02-Mar-2021</span>
<span class="c" style="left:3224.5px;top:306.5px">Farah Johnson, <span class="org" style="position:static">WSA</span></span>
<span class="c" style="left:3412px;top:306.5px">Document Transmittal</span>
<span class="c" style="left:3627.5px;top:306.5px">39</span>
<svg style="left:3744px;top:303.7px;width:21px;height:24px;color:#BABABA"><use href="#bm"/></svg>
<div class="row" style="top:342.56px"></div>
<svg style="left:45.9px;top:352.76px;width:24.6px;height:22.5px"><use href="#alert"/></svg>
<span class="c dn" style="left:96px;top:354.56px">SC198-DT-WSA-NBC-001-0038</span>
<span class="c ti" style="left:460px;top:351.56px">Responded DT for Structural Package (Part 1)</span>
<span class="c" style="left:1082.5px;top:354.56px">001</span>
<span class="c" style="left:1219px;top:354.56px">Warren's</span>
<span class="c" style="left:1334.5px;top:354.56px">Net's</span>
<span class="st iss" style="left:1461px;top:351.36px">ISSUED</span>
<div class="pill" style="left:1650.5px;top:350.76px"><svg style="color:#2D8FD9"><use href="#clip"/></svg><span class="n" style="left:31.3px">1</span></div>
<div class="pill" style="left:1718.0px;top:350.76px"><svg style="left:8.5px;top:9.5px;width:19.5px;height:15.5px"><use href="#mail"/></svg><span class="n" style="left:34.5px">1</span></div>
<div class="pill" style="left:1785.5px;top:350.76px"><svg><use href="#link"/></svg><span class="n" style="left:34.2px">1</span></div>
<div class="pill" style="left:1853.0px;top:350.76px"><svg><use href="#aa"/></svg><span class="n" style="left:32px">1</span></div>
<div class="pill pk" style="left:1920.5px;top:350.76px"><svg><use href="#wf"/></svg><span class="n" style="left:32.4px">1</span></div>
<div class="pill" style="left:1988.0px;top:350.76px"><svg><use href="#ppl"/></svg><span class="n" style="left:32.9px">1</span></div>
<span class="c" style="left:2122px;top:354.56px">09-Mar-2021</span>
<span class="c od" style="left:2263.5px;top:354.56px">666</span>
<span class="c" style="left:2577.5px;top:354.56px">DT Response to a rev&#8230;</span>
<span class="c" style="left:2776.5px;top:354.56px">02-Mar-2021</span>
<span class="c" style="left:2906px;top:354.56px">Farah Johnson, <span class="org" style="position:static">WSA</span></span>
<span class="c" style="left:3092.5px;top:354.56px">02-Mar-2021</span>
<span class="c" style="left:3224.5px;top:354.56px">Farah Johnson, <span class="org" style="position:static">WSA</span></span>
<span class="c" style="left:3412px;top:354.56px">Document Transmittal</span>
<span class="c" style="left:3627.5px;top:354.56px">38</span>
<svg style="left:3744px;top:351.76px;width:21px;height:24px;color:#BABABA"><use href="#bm"/></svg>
<div class="row" style="top:390.63px"></div>
<svg style="left:45.9px;top:400.83px;width:24.6px;height:22.5px"><use href="#alert"/></svg>
<span class="c dn" style="left:96px;top:402.63px">SC198-DT-NBC-WSA-002-0037</span>
<span class="c ti" style="left:460px;top:399.63px">Excavation Pit GIR and Foundation of the Permanent Struc&#8230;</span>
<span class="c" style="left:1082.5px;top:402.63px">002</span>
<span class="c" style="left:1219px;top:402.63px">Net's</span>
<span class="c" style="left:1334.5px;top:402.63px">Warren's</span>
<span class="st iss" style="left:1461px;top:399.43px">ISSUED</span>
<div class="pill" style="left:1650.5px;top:398.83px"><svg style="color:#2D8FD9"><use href="#clip"/></svg><span class="n" style="left:31.3px">1</span></div>
<div class="pill" style="left:1785.5px;top:398.83px"><svg><use href="#link"/></svg><span class="n" style="left:34.2px">1</span></div>
<div class="pill" style="left:1853.0px;top:398.83px"><svg><use href="#aa"/></svg><span class="n" style="left:32px">2</span></div>
<div class="pill pk" style="left:1920.5px;top:398.83px"><svg><use href="#wf"/></svg><span class="n" style="left:32.4px">1</span></div>
<span class="c" style="left:2122px;top:402.63px">07-Mar-2021</span>
<span class="c od" style="left:2263.5px;top:402.63px">668</span>
<span class="c" style="left:2577.5px;top:402.63px">DT Response to a rev&#8230;</span>
<span class="c" style="left:2776.5px;top:402.63px">27-Feb-2021</span>
<span class="c" style="left:2906px;top:402.63px">Andrew Smith, <span class="org" style="position:static">NBC</span></span>
<span class="c" style="left:3092.5px;top:402.63px">27-Feb-2021</span>
<span class="c" style="left:3224.5px;top:402.63px">Andrew Smith, <span class="org" style="position:static">NBC</span></span>
<span class="c" style="left:3412px;top:402.63px">Document Transmittal</span>
<span class="c" style="left:3627.5px;top:402.63px">37</span>
<svg style="left:3744px;top:399.83px;width:21px;height:24px;color:#BABABA"><use href="#bm"/></svg>
<div class="row" style="top:438.69px"></div>
<svg style="left:47px;top:449.69px;width:20px;height:24px"><use href="#doc"/></svg>
<span class="c dn" style="left:96px;top:450.69px">SC198-DT-NBC-WSA-002-0036</span>
<span class="c ti" style="left:460px;top:447.69px">Project Quarterly EM&amp;A Report No. 15</span>
<span class="c" style="left:1082.5px;top:450.69px">002</span>
<span class="c" style="left:1219px;top:450.69px">Net's</span>
<span class="c" style="left:1334.5px;top:450.69px">Warren's</span>
<span class="st dr" style="left:1461px;top:447.49px">DRAFT</span>
<div class="pill" style="left:1853.0px;top:446.89px"><svg><use href="#aa"/></svg><span class="n" style="left:32px">1</span></div>
<span class="c" style="left:2122px;top:450.69px">16-Nov-2020</span>
<span class="c" style="left:2577.5px;top:450.69px">For Information Only</span>
<span class="c" style="left:2776.5px;top:450.69px">13-Nov-2020</span>
<span class="c" style="left:2906px;top:450.69px">Gordon Williams, <span class="org" style="position:static">NBC</span></span>
<span class="c" style="left:3092.5px;top:450.69px">13-Nov-2020</span>
<span class="c" style="left:3224.5px;top:450.69px">Gordon Williams, <span class="org" style="position:static">NBC</span></span>
<span class="c" style="left:3412px;top:450.69px">Document Transmittal</span>
<span class="c" style="left:3627.5px;top:450.69px">36</span>
<svg style="left:3744px;top:447.89px;width:21px;height:24px;color:#BABABA"><use href="#bm"/></svg>
<div class="row" style="top:486.76px"></div>
<svg style="left:45.9px;top:496.96px;width:24.6px;height:22.5px"><use href="#alert"/></svg>
<span class="c dn" style="left:96px;top:498.76px">SC198-DT-NBC-WP203-0035</span>
<span class="c ti" style="left:460px;top:495.76px">Resubmission_3 for HVAC Ground Floor Layouts and Details</span>
<span class="c" style="left:1082.5px;top:498.76px">WP203</span>
<span class="c" style="left:1219px;top:498.76px">Net's</span>
<span class="c" style="left:1334.5px;top:498.76px">Parsons</span>
<span class="st dr" style="left:1461px;top:495.56px">ACKNOWLEDGE</span>
<div class="pill" style="left:1650.5px;top:494.96px"><svg style="color:#2D8FD9"><use href="#clip"/></svg><span class="n" style="left:31.3px">2</span></div>
<div class="pill" style="left:1718.0px;top:494.96px"><svg style="left:8.5px;top:9.5px;width:19.5px;height:15.5px"><use href="#mail"/></svg><span class="n" style="left:34.5px">2</span></div>
<div class="pill" style="left:1853.0px;top:494.96px"><svg><use href="#aa"/></svg><span class="n" style="left:32px">3</span></div>
<div class="pill pk" style="left:1920.5px;top:494.96px"><svg><use href="#wf"/></svg><span class="n" style="left:32.4px">1</span></div>
<div class="pill" style="left:1988.0px;top:494.96px"><svg><use href="#ppl"/></svg><span class="n" style="left:32.9px">1</span></div>
<span class="c" style="left:2122px;top:498.76px">30-Jun-2020</span>
<span class="c od" style="left:2263.5px;top:498.76px">918</span>
<span class="c" style="left:2577.5px;top:498.76px">For Review &amp; Comment</span>
<span class="c" style="left:2776.5px;top:498.76px">21-Jun-2020</span>
<span class="c" style="left:2906px;top:498.76px">Gordon Williams, <span class="org" style="position:static">NBC</span></span>
<span class="c" style="left:3092.5px;top:498.76px">21-Jun-2020</span>
<span class="c" style="left:3224.5px;top:498.76px">Gordon Williams, <span class="org" style="position:static">NBC</span></span>
<span class="c" style="left:3412px;top:498.76px">Document Transmittal</span>
<span class="c" style="left:3627.5px;top:498.76px">35</span>
<svg style="left:3744px;top:495.96px;width:21px;height:24px;color:#BABABA"><use href="#bm"/></svg>
<div class="row" style="top:534.83px"></div>
<svg style="left:45.9px;top:545.0300000000001px;width:24.6px;height:22.5px"><use href="#alert"/></svg>
<span class="c dn" style="left:96px;top:546.83px">SC198-DT-STL-WP203-0034</span>
<span class="c ti" style="left:460px;top:543.83px">Resubmission_3 for HVAC Ground Floor Layouts and Details</span>
<span class="c" style="left:1082.5px;top:546.83px">WP203</span>
<span class="c" style="left:1219px;top:546.83px">Southa</span>
<span class="c" style="left:1334.5px;top:546.83px">Net's</span>
<span class="st iss" style="left:1461px;top:543.63px">ISSUED</span>
<div class="pill" style="left:1650.5px;top:543.0300000000001px"><svg style="color:#2D8FD9"><use href="#clip"/></svg><span class="n" style="left:31.3px">1</span></div>
<div class="pill" style="left:1718.0px;top:543.0300000000001px"><svg style="left:8.5px;top:9.5px;width:19.5px;height:15.5px"><use href="#mail"/></svg><span class="n" style="left:34.5px">2</span></div>
<div class="pill" style="left:1853.0px;top:543.0300000000001px"><svg><use href="#aa"/></svg><span class="n" style="left:32px">3</span></div>
<div class="pill pk" style="left:1920.5px;top:543.0300000000001px"><svg><use href="#wf"/></svg><span class="n" style="left:32.4px">1</span></div>
<div class="pill" style="left:1988.0px;top:543.0300000000001px"><svg><use href="#ppl"/></svg><span class="n" style="left:32.9px">1</span></div>
<span class="c" style="left:2122px;top:546.83px">30-Jun-2020</span>
<span class="c od" style="left:2263.5px;top:546.83px">918</span>
<span class="c" style="left:2577.5px;top:546.83px">For Review &amp; Comment</span>
<span class="c" style="left:2776.5px;top:546.83px">19-Jun-2020</span>
<span class="c" style="left:2906px;top:546.83px">Gordon Williams, <span class="org" style="position:static">NBC</span></span>
<span class="c" style="left:3092.5px;top:546.83px">19-Jun-2020</span>
<span class="c" style="left:3224.5px;top:546.83px">Jane Smith, <span class="org" style="position:static">STL</span></span>
<span class="c" style="left:3412px;top:546.83px">Document Transmittal</span>
<span class="c" style="left:3627.5px;top:546.83px">34</span>
<svg style="left:3744px;top:544.0300000000001px;width:21px;height:24px;color:#BABABA"><use href="#bm"/></svg>
<div class="row" style="top:582.89px"></div>
<svg style="left:45.9px;top:593.09px;width:24.6px;height:22.5px"><use href="#alert"/></svg>
<span class="c dn" style="left:96px;top:594.89px">SC198-DT-STL-WP203-0033</span>
<span class="c ti" style="left:460px;top:591.89px">Vertical and Elevator Services</span>
<span class="c" style="left:1082.5px;top:594.89px">WP203</span>
<span class="c" style="left:1219px;top:594.89px">Southa</span>
<span class="c" style="left:1334.5px;top:594.89px">Net's</span>
<span class="st iss" style="left:1461px;top:591.6899999999999px">ISSUED</span>
<div class="pill" style="left:1650.5px;top:591.09px"><svg style="color:#2D8FD9"><use href="#clip"/></svg><span class="n" style="left:31.3px">3</span></div>
<div class="pill" style="left:1853.0px;top:591.09px"><svg><use href="#aa"/></svg><span class="n" style="left:32px">2</span></div>
<div class="pill" style="left:1920.5px;top:591.09px"><svg><use href="#wf"/></svg><span class="n" style="left:32.4px">2</span></div>
<span class="c" style="left:2122px;top:594.89px">25-Jun-2020</span>
<span class="c od" style="left:2263.5px;top:594.89px">923</span>
<span class="c" style="left:2577.5px;top:594.89px">For Review &amp; Comment</span>
<span class="c" style="left:2776.5px;top:594.89px">18-Jun-2020</span>
<span class="c" style="left:2906px;top:594.89px">Jane Smith, <span class="org" style="position:static">STL</span></span>
<span class="c" style="left:3092.5px;top:594.89px">18-Jun-2020</span>
<span class="c" style="left:3224.5px;top:594.89px">Jane Smith, <span class="org" style="position:static">STL</span></span>
<span class="c" style="left:3412px;top:594.89px">Document Transmittal</span>
<span class="c" style="left:3627.5px;top:594.89px">33</span>
<svg style="left:3744px;top:592.09px;width:21px;height:24px;color:#BABABA"><use href="#bm"/></svg>
<div class="row" style="top:630.95px"></div>
<svg style="left:45.9px;top:641.1500000000001px;width:24.6px;height:22.5px"><use href="#alert"/></svg>
<span class="c dn" style="left:96px;top:642.95px">SC198-DT-STL-WP203-0032</span>
<span class="c ti" style="left:460px;top:639.95px">Lift &amp; Mechanical Details</span>
<span class="c" style="left:1082.5px;top:642.95px">WP203</span>
<span class="c" style="left:1219px;top:642.95px">Southa</span>
<span class="c" style="left:1334.5px;top:642.95px">Net's</span>
<span class="st iss" style="left:1461px;top:639.75px">ISSUED</span>
<div class="pill" style="left:1650.5px;top:639.1500000000001px"><svg style="color:#2D8FD9"><use href="#clip"/></svg><span class="n" style="left:31.3px">3</span></div>
<div class="pill" style="left:1853.0px;top:639.1500000000001px"><svg><use href="#aa"/></svg><span class="n" style="left:32px">2</span></div>
<div class="pill pk" style="left:1920.5px;top:639.1500000000001px"><svg><use href="#wf"/></svg><span class="n" style="left:32.4px">2</span></div>
<span class="c" style="left:2122px;top:642.95px">18-Jun-2020</span>
<span class="c od" style="left:2263.5px;top:642.95px">930</span>
<span class="c" style="left:2577.5px;top:642.95px">For Information Only</span>
<span class="c" style="left:2776.5px;top:642.95px">19-Jun-2020</span>
<span class="c" style="left:2906px;top:642.95px">Gordon Williams, <span class="org" style="position:static">NBC</span></span>
<span class="c" style="left:3092.5px;top:642.95px">18-Jun-2020</span>
<span class="c" style="left:3224.5px;top:642.95px">Jane Smith, <span class="org" style="position:static">STL</span></span>
<span class="c" style="left:3412px;top:642.95px">Document Transmittal</span>
<span class="c" style="left:3627.5px;top:642.95px">32</span>
<svg style="left:3744px;top:640.1500000000001px;width:21px;height:24px;color:#BABABA"><use href="#bm"/></svg>
<div class="row" style="top:679.02px"></div>
<svg style="left:45.9px;top:689.22px;width:24.6px;height:22.5px"><use href="#alert"/></svg>
<span class="c dn" style="left:96px;top:691.02px">SC198-DT-NBC-WP203-0031</span>
<span class="c ti" style="left:460px;top:688.02px">HVAC Wiring &amp; Piping Details Consultant Review</span>
<span class="c" style="left:1082.5px;top:691.02px">WP203</span>
<span class="c" style="left:1219px;top:691.02px">Net's</span>
<span class="c" style="left:1334.5px;top:691.02px">Parsons</span>
<span class="st iss" style="left:1461px;top:687.8199999999999px">ISSUED</span>
<div class="pill" style="left:1650.5px;top:687.22px"><svg style="color:#2D8FD9"><use href="#clip"/></svg><span class="n" style="left:31.3px">1</span></div>
<div class="pill" style="left:1853.0px;top:687.22px"><svg><use href="#aa"/></svg><span class="n" style="left:32px">2</span></div>
<div class="pill pk" style="left:1920.5px;top:687.22px"><svg><use href="#wf"/></svg><span class="n" style="left:32.4px">1</span></div>
<span class="c" style="left:2122px;top:691.02px">25-Jun-2020</span>
<span class="c od" style="left:2263.5px;top:691.02px">923</span>
<span class="c" style="left:2577.5px;top:691.02px">For Review &amp; Comment</span>
<span class="c" style="left:2776.5px;top:691.02px">18-Jun-2020</span>
<span class="c" style="left:2906px;top:691.02px">Gordon Williams, <span class="org" style="position:static">NBC</span></span>
<span class="c" style="left:3092.5px;top:691.02px">18-Jun-2020</span>
<span class="c" style="left:3224.5px;top:691.02px">Gordon Williams, <span class="org" style="position:static">NBC</span></span>
<span class="c" style="left:3412px;top:691.02px">Document Transmittal</span>
<span class="c" style="left:3627.5px;top:691.02px">31</span>
<svg style="left:3744px;top:688.22px;width:21px;height:24px;color:#BABABA"><use href="#bm"/></svg>
<div class="row" style="top:727.09px"></div>
<svg style="left:45.9px;top:737.2900000000001px;width:24.6px;height:22.5px"><use href="#alert"/></svg>
<span class="c dn" style="left:96px;top:739.09px">SC198-DT-STL-WP203-0030</span>
<span class="c ti" style="left:460px;top:736.09px">Structural Paving Wall Bracing</span>
<span class="c" style="left:1082.5px;top:739.09px">WP203</span>
<span class="c" style="left:1219px;top:739.09px">Southa</span>
<span class="c" style="left:1334.5px;top:739.09px">Net's</span>
<span class="st iss" style="left:1461px;top:735.89px">ISSUED</span>
<div class="pill" style="left:1650.5px;top:735.2900000000001px"><svg style="color:#2D8FD9"><use href="#clip"/></svg><span class="n" style="left:31.3px">1</span></div>
<div class="pill" style="left:1718.0px;top:735.2900000000001px"><svg style="left:8.5px;top:9.5px;width:19.5px;height:15.5px"><use href="#mail"/></svg><span class="n" style="left:34.5px">1</span></div>
<div class="pill" style="left:1853.0px;top:735.2900000000001px"><svg><use href="#aa"/></svg><span class="n" style="left:32px">1</span></div>
<div class="pill pk" style="left:1920.5px;top:735.2900000000001px"><svg><use href="#wf"/></svg><span class="n" style="left:32.4px">1</span></div>
<div class="pill" style="left:1988.0px;top:735.2900000000001px"><svg><use href="#ppl"/></svg><span class="n" style="left:32.9px">1</span></div>
<span class="c" style="left:2122px;top:739.09px">25-Jun-2020</span>
<span class="c od" style="left:2263.5px;top:739.09px">923</span>
<span class="c" style="left:2577.5px;top:739.09px">For Review &amp; Comment</span>
<span class="c" style="left:2776.5px;top:739.09px">18-Jun-2020</span>
<span class="c" style="left:2906px;top:739.09px">Jane Smith, <span class="org" style="position:static">STL</span></span>
<span class="c" style="left:3092.5px;top:739.09px">18-Jun-2020</span>
<span class="c" style="left:3224.5px;top:739.09px">Jane Smith, <span class="org" style="position:static">STL</span></span>
<span class="c" style="left:3412px;top:739.09px">Document Transmittal</span>
<span class="c" style="left:3627.5px;top:739.09px">30</span>
<svg style="left:3744px;top:736.2900000000001px;width:21px;height:24px;color:#BABABA"><use href="#bm"/></svg>
<div class="row" style="top:775.15px"></div>
<span class="c dn" style="left:96px;top:787.15px">SC198-DT-STL-WP203-0029</span>
<span class="c ti" style="left:460px;top:784.15px">HVAC Wiring and Piping Details</span>
<span class="c" style="left:1082.5px;top:787.15px">WP203</span>
<span class="c" style="left:1219px;top:787.15px">Southa</span>
<span class="c" style="left:1334.5px;top:787.15px">Net's</span>
<span class="st cl" style="left:1461px;top:783.9499999999999px">CLOSED</span>
<div class="pill" style="left:1650.5px;top:783.35px"><svg style="color:#2D8FD9"><use href="#clip"/></svg><span class="n" style="left:31.3px">3</span></div>
<div class="pill" style="left:1853.0px;top:783.35px"><svg><use href="#aa"/></svg><span class="n" style="left:32px">2</span></div>
<div class="pill" style="left:1920.5px;top:783.35px"><svg><use href="#wf"/></svg><span class="n" style="left:32.4px">2</span></div>
<span class="c" style="left:2122px;top:787.15px">25-Jun-2020</span>
<span class="c" style="left:2577.5px;top:787.15px">For Review &amp; Comment</span>
<span class="c" style="left:2776.5px;top:787.15px">18-Jun-2020</span>
<span class="c" style="left:2906px;top:787.15px">Jane Smith, <span class="org" style="position:static">STL</span></span>
<span class="c" style="left:3092.5px;top:787.15px">18-Jun-2020</span>
<span class="c" style="left:3224.5px;top:787.15px">Jane Smith, <span class="org" style="position:static">STL</span></span>
<span class="c" style="left:3412px;top:787.15px">Document Transmittal</span>
<span class="c" style="left:3627.5px;top:787.15px">29</span>
<svg style="left:3744px;top:784.35px;width:21px;height:24px;color:#BABABA"><use href="#bm"/></svg>
<div class="row" style="top:823.21px"></div>
<svg style="left:45.9px;top:833.4100000000001px;width:24.6px;height:22.5px"><use href="#alert"/></svg>
<span class="c dn" style="left:96px;top:835.21px">SC198-DT-STL-WP203-0028</span>
<span class="c ti" style="left:460px;top:832.21px">Structural Concrete Outline</span>
<span class="c" style="left:1082.5px;top:835.21px">WP203</span>
<span class="c" style="left:1219px;top:835.21px">Southa</span>
<span class="c" style="left:1334.5px;top:835.21px">Net's</span>
<span class="st iss" style="left:1461px;top:832.01px">ISSUED</span>
<div class="pill" style="left:1650.5px;top:831.4100000000001px"><svg style="color:#2D8FD9"><use href="#clip"/></svg><span class="n" style="left:31.3px">1</span></div>
<div class="pill" style="left:1718.0px;top:831.4100000000001px"><svg style="left:8.5px;top:9.5px;width:19.5px;height:15.5px"><use href="#mail"/></svg><span class="n" style="left:34.5px">1</span></div>
<div class="pill" style="left:1853.0px;top:831.4100000000001px"><svg><use href="#aa"/></svg><span class="n" style="left:32px">1</span></div>
<div class="pill pk" style="left:1920.5px;top:831.4100000000001px"><svg><use href="#wf"/></svg><span class="n" style="left:32.4px">1</span></div>
<div class="pill" style="left:1988.0px;top:831.4100000000001px"><svg><use href="#ppl"/></svg><span class="n" style="left:32.9px">1</span></div>
<span class="c" style="left:2122px;top:835.21px">25-Jun-2020</span>
<span class="c od" style="left:2263.5px;top:835.21px">923</span>
<span class="c" style="left:2577.5px;top:835.21px">For Review &amp; Comment</span>
<span class="c" style="left:2776.5px;top:835.21px">18-Jun-2020</span>
<span class="c" style="left:2906px;top:835.21px">Jane Smith, <span class="org" style="position:static">STL</span></span>
<span class="c" style="left:3092.5px;top:835.21px">18-Jun-2020</span>
<span class="c" style="left:3224.5px;top:835.21px">Jane Smith, <span class="org" style="position:static">STL</span></span>
<span class="c" style="left:3412px;top:835.21px">Document Transmittal</span>
<span class="c" style="left:3627.5px;top:835.21px">28</span>
<svg style="left:3744px;top:832.4100000000001px;width:21px;height:24px;color:#BABABA"><use href="#bm"/></svg>
<div class="row" style="top:871.28px"></div>
<svg style="left:45.9px;top:881.48px;width:24.6px;height:22.5px"><use href="#alert"/></svg>
<span class="c dn" style="left:96px;top:883.28px">SC198-DT-STL-WP203-0027</span>
<span class="c ti" style="left:460px;top:880.28px">Structural Base Level Reinforcement</span>
<span class="c" style="left:1082.5px;top:883.28px">WP203</span>
<span class="c" style="left:1219px;top:883.28px">Southa</span>
<span class="c" style="left:1334.5px;top:883.28px">Net's</span>
<span class="st iss" style="left:1461px;top:880.0799999999999px">ISSUED</span>
<div class="pill" style="left:1650.5px;top:879.48px"><svg style="color:#2D8FD9"><use href="#clip"/></svg><span class="n" style="left:31.3px">1</span></div>
<div class="pill" style="left:1718.0px;top:879.48px"><svg style="left:8.5px;top:9.5px;width:19.5px;height:15.5px"><use href="#mail"/></svg><span class="n" style="left:34.5px">2</span></div>
<div class="pill" style="left:1853.0px;top:879.48px"><svg><use href="#aa"/></svg><span class="n" style="left:32px">1</span></div>
<div class="pill pk" style="left:1920.5px;top:879.48px"><svg><use href="#wf"/></svg><span class="n" style="left:32.4px">1</span></div>
<div class="pill" style="left:1988.0px;top:879.48px"><svg><use href="#ppl"/></svg><span class="n" style="left:32.9px">2</span></div>
<span class="c" style="left:2122px;top:883.28px">25-Jun-2020</span>
<span class="c od" style="left:2263.5px;top:883.28px">923</span>
<span class="c" style="left:2577.5px;top:883.28px">For Review &amp; Comment</span>
<span class="c" style="left:2776.5px;top:883.28px">18-Jun-2020</span>
<span class="c" style="left:2906px;top:883.28px">Jane Smith, <span class="org" style="position:static">STL</span></span>
<span class="c" style="left:3092.5px;top:883.28px">18-Jun-2020</span>
<span class="c" style="left:3224.5px;top:883.28px">Jane Smith, <span class="org" style="position:static">STL</span></span>
<span class="c" style="left:3412px;top:883.28px">Document Transmittal</span>
<span class="c" style="left:3627.5px;top:883.28px">27</span>
<svg style="left:3744px;top:880.48px;width:21px;height:24px;color:#BABABA"><use href="#bm"/></svg>
<div class="row" style="top:919.35px"></div>
<svg style="left:45.9px;top:929.5500000000001px;width:24.6px;height:22.5px"><use href="#alert"/></svg>
<span class="c dn" style="left:96px;top:931.35px">SC198-DT-STL-WP203-0026</span>
<span class="c ti" style="left:460px;top:928.35px">Structural Concrete Foundation</span>
<span class="c" style="left:1082.5px;top:931.35px">WP203</span>
<span class="c" style="left:1219px;top:931.35px">Southa</span>
<span class="c" style="left:1334.5px;top:931.35px">Net's</span>
<span class="st iss" style="left:1461px;top:928.15px">ISSUED</span>
<div class="pill" style="left:1650.5px;top:927.5500000000001px"><svg style="color:#2D8FD9"><use href="#clip"/></svg><span class="n" style="left:31.3px">1</span></div>
<div class="pill" style="left:1718.0px;top:927.5500000000001px"><svg style="left:8.5px;top:9.5px;width:19.5px;height:15.5px"><use href="#mail"/></svg><span class="n" style="left:34.5px">1</span></div>
<div class="pill" style="left:1853.0px;top:927.5500000000001px"><svg><use href="#aa"/></svg><span class="n" style="left:32px">1</span></div>
<div class="pill pk" style="left:1920.5px;top:927.5500000000001px"><svg><use href="#wf"/></svg><span class="n" style="left:32.4px">1</span></div>
<div class="pill" style="left:1988.0px;top:927.5500000000001px"><svg><use href="#ppl"/></svg><span class="n" style="left:32.9px">1</span></div>
<span class="c" style="left:2122px;top:931.35px">25-Jun-2020</span>
<span class="c od" style="left:2263.5px;top:931.35px">923</span>
<span class="c" style="left:2577.5px;top:931.35px">For Review &amp; Comment</span>
<span class="c" style="left:2776.5px;top:931.35px">18-Jun-2020</span>
<span class="c" style="left:2906px;top:931.35px">Jane Smith, <span class="org" style="position:static">STL</span></span>
<span class="c" style="left:3092.5px;top:931.35px">18-Jun-2020</span>
<span class="c" style="left:3224.5px;top:931.35px">Jane Smith, <span class="org" style="position:static">STL</span></span>
<span class="c" style="left:3412px;top:931.35px">Document Transmittal</span>
<span class="c" style="left:3627.5px;top:931.35px">26</span>
<svg style="left:3744px;top:928.5500000000001px;width:21px;height:24px;color:#BABABA"><use href="#bm"/></svg>
<div class="row" style="top:967.41px"></div>
<svg style="left:45.9px;top:977.61px;width:24.6px;height:22.5px"><use href="#alert"/></svg>
<span class="c dn" style="left:96px;top:979.41px">SC198-DT-STL-WP203-0025</span>
<span class="c ti" style="left:460px;top:976.41px">Structural Gridline</span>
<span class="c" style="left:1082.5px;top:979.41px">WP203</span>
<span class="c" style="left:1219px;top:979.41px">Southa</span>
<span class="c" style="left:1334.5px;top:979.41px">Net's</span>
<span class="st iss" style="left:1461px;top:976.2099999999999px">ISSUED</span>
<div class="pill" style="left:1650.5px;top:975.61px"><svg style="color:#2D8FD9"><use href="#clip"/></svg><span class="n" style="left:31.3px">1</span></div>
<div class="pill" style="left:1718.0px;top:975.61px"><svg style="left:8.5px;top:9.5px;width:19.5px;height:15.5px"><use href="#mail"/></svg><span class="n" style="left:34.5px">1</span></div>
<div class="pill" style="left:1853.0px;top:975.61px"><svg><use href="#aa"/></svg><span class="n" style="left:32px">1</span></div>
<div class="pill pk" style="left:1920.5px;top:975.61px"><svg><use href="#wf"/></svg><span class="n" style="left:32.4px">1</span></div>
<div class="pill" style="left:1988.0px;top:975.61px"><svg><use href="#ppl"/></svg><span class="n" style="left:32.9px">1</span></div>
<span class="c" style="left:2122px;top:979.41px">25-Jun-2020</span>
<span class="c od" style="left:2263.5px;top:979.41px">923</span>
<span class="c" style="left:2577.5px;top:979.41px">For Review &amp; Comment</span>
<span class="c" style="left:2776.5px;top:979.41px">18-Jun-2020</span>
<span class="c" style="left:2906px;top:979.41px">Jane Smith, <span class="org" style="position:static">STL</span></span>
<span class="c" style="left:3092.5px;top:979.41px">18-Jun-2020</span>
<span class="c" style="left:3224.5px;top:979.41px">Jane Smith, <span class="org" style="position:static">STL</span></span>
<span class="c" style="left:3412px;top:979.41px">Document Transmittal</span>
<span class="c" style="left:3627.5px;top:979.41px">25</span>
<svg style="left:3744px;top:976.61px;width:21px;height:24px;color:#BABABA"><use href="#bm"/></svg>
<div class="row" style="top:1015.47px"></div>
<svg style="left:45.9px;top:1025.67px;width:24.6px;height:22.5px"><use href="#alert"/></svg>
<span class="c dn" style="left:96px;top:1027.47px">SC198-DT-STL-WP203-0024</span>
<span class="c ti" style="left:460px;top:1024.47px">Structural ConcourseLevel</span>
<span class="c" style="left:1082.5px;top:1027.47px">WP203</span>
<span class="c" style="left:1219px;top:1027.47px">Southa</span>
<span class="c" style="left:1334.5px;top:1027.47px">Net's</span>
<span class="st iss" style="left:1461px;top:1024.27px">ISSUED</span>
<div class="pill" style="left:1650.5px;top:1023.6700000000001px"><svg style="color:#2D8FD9"><use href="#clip"/></svg><span class="n" style="left:31.3px">1</span></div>
<div class="pill" style="left:1718.0px;top:1023.6700000000001px"><svg style="left:8.5px;top:9.5px;width:19.5px;height:15.5px"><use href="#mail"/></svg><span class="n" style="left:34.5px">1</span></div>
<div class="pill" style="left:1853.0px;top:1023.6700000000001px"><svg><use href="#aa"/></svg><span class="n" style="left:32px">1</span></div>
<div class="pill pk" style="left:1920.5px;top:1023.6700000000001px"><svg><use href="#wf"/></svg><span class="n" style="left:32.4px">1</span></div>
<div class="pill" style="left:1988.0px;top:1023.6700000000001px"><svg><use href="#ppl"/></svg><span class="n" style="left:32.9px">1</span></div>
<span class="c" style="left:2122px;top:1027.47px">25-Jun-2020</span>
<span class="c od" style="left:2263.5px;top:1027.47px">923</span>
<span class="c" style="left:2577.5px;top:1027.47px">For Review &amp; Comment</span>
<span class="c" style="left:2776.5px;top:1027.47px">18-Jun-2020</span>
<span class="c" style="left:2906px;top:1027.47px">Jane Smith, <span class="org" style="position:static">STL</span></span>
<span class="c" style="left:3092.5px;top:1027.47px">18-Jun-2020</span>
<span class="c" style="left:3224.5px;top:1027.47px">Jane Smith, <span class="org" style="position:static">STL</span></span>
<span class="c" style="left:3412px;top:1027.47px">Document Transmittal</span>
<span class="c" style="left:3627.5px;top:1027.47px">24</span>
<svg style="left:3744px;top:1024.67px;width:21px;height:24px;color:#BABABA"><use href="#bm"/></svg>
<div class="row" style="top:1063.54px"></div>
<svg style="left:45.9px;top:1073.74px;width:24.6px;height:22.5px"><use href="#alert"/></svg>
<span class="c dn" style="left:96px;top:1075.54px">SC198-DT-NBC-WP203-0023</span>
<span class="c ti" style="left:460px;top:1072.54px">Structural Concourse Level</span>
<span class="c" style="left:1082.5px;top:1075.54px">WP203</span>
<span class="c" style="left:1219px;top:1075.54px">Net's</span>
<span class="c" style="left:1334.5px;top:1075.54px">Parsons</span>
<span class="st iss" style="left:1461px;top:1072.34px">ISSUED</span>
<div class="pill" style="left:1650.5px;top:1071.74px"><svg style="color:#2D8FD9"><use href="#clip"/></svg><span class="n" style="left:31.3px">1</span></div>
<div class="pill" style="left:1853.0px;top:1071.74px"><svg><use href="#aa"/></svg><span class="n" style="left:32px">1</span></div>
<div class="pill pk" style="left:1920.5px;top:1071.74px"><svg><use href="#wf"/></svg><span class="n" style="left:32.4px">1</span></div>
<span class="c" style="left:2122px;top:1075.54px">24-Jun-2020</span>
<span class="c od" style="left:2263.5px;top:1075.54px">924</span>
<span class="c" style="left:2577.5px;top:1075.54px">For Review &amp; Comment</span>
<span class="c" style="left:2776.5px;top:1075.54px">21-Jun-2020</span>
<span class="c" style="left:2906px;top:1075.54px">Gordon Williams, <span class="org" style="position:static">NBC</span></span>
<span class="c" style="left:3092.5px;top:1075.54px">18-Jun-2020</span>
<span class="c" style="left:3224.5px;top:1075.54px">Gordon Williams, <span class="org" style="position:static">NBC</span></span>
<span class="c" style="left:3412px;top:1075.54px">Document Transmittal</span>
<span class="c" style="left:3627.5px;top:1075.54px">23</span>
<svg style="left:3744px;top:1072.74px;width:21px;height:24px;color:#BABABA"><use href="#bm"/></svg>
<div class="row" style="top:1111.61px"></div>
<svg style="left:45.9px;top:1121.81px;width:24.6px;height:22.5px"><use href="#alert"/></svg>
<span class="c dn" style="left:96px;top:1123.61px">SC198-DT-STL-WP203-0022</span>
<span class="c ti" style="left:460px;top:1120.61px">Structural Shop Drawings</span>
<span class="c" style="left:1082.5px;top:1123.61px">WP203</span>
<span class="c" style="left:1219px;top:1123.61px">Southa</span>
<span class="c" style="left:1334.5px;top:1123.61px">Net's</span>
<span class="st iss" style="left:1461px;top:1120.4099999999999px">ISSUED</span>
<div class="pill" style="left:1650.5px;top:1119.81px"><svg style="color:#2D8FD9"><use href="#clip"/></svg><span class="n" style="left:31.3px">1</span></div>
<div class="pill" style="left:1853.0px;top:1119.81px"><svg><use href="#aa"/></svg><span class="n" style="left:32px">5</span></div>
<div class="pill pk" style="left:1920.5px;top:1119.81px"><svg><use href="#wf"/></svg><span class="n" style="left:32.4px">1</span></div>
<span class="c" style="left:2122px;top:1123.61px">25-Jun-2020</span>
<span class="c od" style="left:2263.5px;top:1123.61px">923</span>
<span class="c" style="left:2577.5px;top:1123.61px">For Review &amp; Comment</span>
<span class="c" style="left:2776.5px;top:1123.61px">18-Jun-2020</span>
<span class="c" style="left:2906px;top:1123.61px">Jane Smith, <span class="org" style="position:static">STL</span></span>
<span class="c" style="left:3092.5px;top:1123.61px">18-Jun-2020</span>
<span class="c" style="left:3224.5px;top:1123.61px">Jane Smith, <span class="org" style="position:static">STL</span></span>
<span class="c" style="left:3412px;top:1123.61px">Document Transmittal</span>
<span class="c" style="left:3627.5px;top:1123.61px">22</span>
<svg style="left:3744px;top:1120.81px;width:21px;height:24px;color:#BABABA"><use href="#bm"/></svg>
<div class="row" style="top:1159.67px"></div>
<svg style="left:45.9px;top:1169.8700000000001px;width:24.6px;height:22.5px"><use href="#alert"/></svg>
<span class="c dn" style="left:96px;top:1171.67px">SC198-DT-STL-WP203-0021</span>
<span class="c ti" style="left:460px;top:1168.67px">Ground Floor Exhaust Fan and Supply Duct</span>
<span class="c" style="left:1082.5px;top:1171.67px">WP203</span>
<span class="c" style="left:1219px;top:1171.67px">Southa</span>
<span class="c" style="left:1334.5px;top:1171.67px">Net's</span>
<span class="st iss" style="left:1461px;top:1168.47px">ISSUED</span>
<div class="pill" style="left:1650.5px;top:1167.8700000000001px"><svg style="color:#2D8FD9"><use href="#clip"/></svg><span class="n" style="left:31.3px">1</span></div>
<div class="pill" style="left:1718.0px;top:1167.8700000000001px"><svg style="left:8.5px;top:9.5px;width:19.5px;height:15.5px"><use href="#mail"/></svg><span class="n" style="left:34.5px">1</span></div>
<div class="pill" style="left:1785.5px;top:1167.8700000000001px"><svg><use href="#link"/></svg><span class="n" style="left:34.2px">1</span></div>
<div class="pill" style="left:1853.0px;top:1167.8700000000001px"><svg><use href="#aa"/></svg><span class="n" style="left:32px">2</span></div>
<div class="pill" style="left:1920.5px;top:1167.8700000000001px"><svg><use href="#wf"/></svg><span class="n" style="left:32.4px">1</span></div>
<div class="pill" style="left:1988.0px;top:1167.8700000000001px"><svg><use href="#ppl"/></svg><span class="n" style="left:32.9px">1</span></div>
<span class="c" style="left:2122px;top:1171.67px">22-Jun-2020</span>
<span class="c od" style="left:2263.5px;top:1171.67px">926</span>
<span class="c" style="left:2577.5px;top:1171.67px">For Information Only</span>
<span class="c" style="left:2776.5px;top:1171.67px">19-Jun-2020</span>
<span class="c" style="left:2906px;top:1171.67px">Gordon Williams, <span class="org" style="position:static">NBC</span></span>
<span class="c" style="left:3092.5px;top:1171.67px">18-Jun-2020</span>
<span class="c" style="left:3224.5px;top:1171.67px">Jane Smith, <span class="org" style="position:static">STL</span></span>
<span class="c" style="left:3412px;top:1171.67px">Document Transmittal</span>
<span class="c" style="left:3627.5px;top:1171.67px">21</span>
<svg style="left:3744px;top:1168.8700000000001px;width:21px;height:24px;color:#BABABA"><use href="#bm"/></svg>
<div class="row" style="top:1207.73px"></div>
<span class="c dn" style="left:96px;top:1219.73px">SC198-DT-NBC-WP203-0020</span>
<span class="c ti" style="left:460px;top:1216.73px">Re Submission_2 for HVAC Ground Floor Layouts and Details</span>
<span class="c" style="left:1082.5px;top:1219.73px">WP203</span>
<span class="c" style="left:1219px;top:1219.73px">Net's</span>
<span class="c" style="left:1334.5px;top:1219.73px">Southa</span>
<span class="st iss" style="left:1461px;top:1216.53px">ISSUED</span>
<div class="pill" style="left:1650.5px;top:1215.93px"><svg style="color:#2D8FD9"><use href="#clip"/></svg><span class="n" style="left:31.3px">2</span></div>
<div class="pill" style="left:1718.0px;top:1215.93px"><svg style="left:8.5px;top:9.5px;width:19.5px;height:15.5px"><use href="#mail"/></svg><span class="n" style="left:34.5px">1</span></div>
<div class="pill" style="left:1853.0px;top:1215.93px"><svg><use href="#aa"/></svg><span class="n" style="left:32px">10</span></div>
<span class="c" style="left:2577.5px;top:1219.73px">DT Response to a rev&#8230;</span>
<span class="c" style="left:2776.5px;top:1219.73px">18-Jun-2020</span>
<span class="c" style="left:2906px;top:1219.73px">Gordon Williams, <span class="org" style="position:static">NBC</span></span>
<span class="c" style="left:3092.5px;top:1219.73px">18-Jun-2020</span>
<span class="c" style="left:3224.5px;top:1219.73px">Gordon Williams, <span class="org" style="position:static">NBC</span></span>
<span class="c" style="left:3412px;top:1219.73px">Document Transmittal</span>
<span class="c" style="left:3627.5px;top:1219.73px">20</span>
<svg style="left:3744px;top:1216.93px;width:21px;height:24px;color:#BABABA"><use href="#bm"/></svg>
<div class="row" style="top:1255.8px"></div>
<svg style="left:45.9px;top:1266.0px;width:24.6px;height:22.5px"><use href="#alert"/></svg>
<span class="c dn" style="left:96px;top:1267.8px">SC198-DT-STL-WP203-0019</span>
<span class="c ti" style="left:460px;top:1264.8px">Air conditioning, Ventilation &amp; Chilled Water</span>
<span class="c" style="left:1082.5px;top:1267.8px">WP203</span>
<span class="c" style="left:1219px;top:1267.8px">Southa</span>
<span class="c" style="left:1334.5px;top:1267.8px">Net's</span>
<span class="st iss" style="left:1461px;top:1264.6px">ISSUED</span>
<div class="pill" style="left:1650.5px;top:1264.0px"><svg style="color:#2D8FD9"><use href="#clip"/></svg><span class="n" style="left:31.3px">1</span></div>
<div class="pill" style="left:1718.0px;top:1264.0px"><svg style="left:8.5px;top:9.5px;width:19.5px;height:15.5px"><use href="#mail"/></svg><span class="n" style="left:34.5px">1</span></div>
<div class="pill" style="left:1853.0px;top:1264.0px"><svg><use href="#aa"/></svg><span class="n" style="left:32px">2</span></div>
<div class="pill pk" style="left:1920.5px;top:1264.0px"><svg><use href="#wf"/></svg><span class="n" style="left:32.4px">1</span></div>
<div class="pill" style="left:1988.0px;top:1264.0px"><svg><use href="#ppl"/></svg><span class="n" style="left:32.9px">1</span></div>
<span class="c" style="left:2122px;top:1267.8px">18-Jun-2020</span>
<span class="c od" style="left:2263.5px;top:1267.8px">930</span>
<span class="c" style="left:2577.5px;top:1267.8px">For Review &amp; Comment</span>
<span class="c" style="left:2776.5px;top:1267.8px">18-Jun-2020</span>
<span class="c" style="left:2906px;top:1267.8px">Jane Smith, <span class="org" style="position:static">STL</span></span>
<span class="c" style="left:3092.5px;top:1267.8px">18-Jun-2020</span>
<span class="c" style="left:3224.5px;top:1267.8px">Jane Smith, <span class="org" style="position:static">STL</span></span>
<span class="c" style="left:3412px;top:1267.8px">Document Transmittal</span>
<span class="c" style="left:3627.5px;top:1267.8px">19</span>
<svg style="left:3744px;top:1265.0px;width:21px;height:24px;color:#BABABA"><use href="#bm"/></svg>
<div class="row" style="top:1303.87px"></div>
<svg style="left:47px;top:1314.87px;width:20px;height:24px"><use href="#doc"/></svg>
<span class="c dn" style="left:96px;top:1315.87px">SC198-DT-NBC-001-0017</span>
<span class="c ti" style="left:460px;top:1312.87px">Concept Planning</span>
<span class="c" style="left:1082.5px;top:1315.87px">001</span>
<span class="c" style="left:1219px;top:1315.87px">Net's</span>
<span class="c" style="left:1334.5px;top:1315.87px">Parsons</span>
<span class="st dr" style="left:1461px;top:1312.6699999999998px">DRAFT</span>
<div class="pill" style="left:1853.0px;top:1312.07px"><svg><use href="#aa"/></svg><span class="n" style="left:32px">1</span></div>
<span class="c" style="left:2577.5px;top:1315.87px">For Information Only</span>
<span class="c" style="left:2776.5px;top:1315.87px">18-Jun-2020</span>
<span class="c" style="left:2906px;top:1315.87px">Gordon Williams, <span class="org" style="position:static">NBC</span></span>
<span class="c" style="left:3092.5px;top:1315.87px">18-Jun-2020</span>
<span class="c" style="left:3224.5px;top:1315.87px">Gordon Williams, <span class="org" style="position:static">NBC</span></span>
<span class="c" style="left:3412px;top:1315.87px">Document Transmittal</span>
<span class="c" style="left:3627.5px;top:1315.87px">17</span>
<svg style="left:3744px;top:1313.07px;width:21px;height:24px;color:#BABABA"><use href="#bm"/></svg>
<div class="row" style="top:1351.93px"></div>
<svg style="left:45.9px;top:1362.13px;width:24.6px;height:22.5px"><use href="#alert"/></svg>
<span class="c dn" style="left:96px;top:1363.93px">SC198-DT-NBC-WP203-0018</span>
<span class="c ti" style="left:460px;top:1360.93px">Concept Planning</span>
<span class="c" style="left:1082.5px;top:1363.93px">WP203</span>
<span class="c" style="left:1219px;top:1363.93px">Net's</span>
<span class="c" style="left:1334.5px;top:1363.93px">Southa</span>
<span class="st iss" style="left:1461px;top:1360.73px">ISSUED</span>
<div class="pill" style="left:1650.5px;top:1360.13px"><svg style="color:#2D8FD9"><use href="#clip"/></svg><span class="n" style="left:31.3px">1</span></div>
<div class="pill" style="left:1718.0px;top:1360.13px"><svg style="left:8.5px;top:9.5px;width:19.5px;height:15.5px"><use href="#mail"/></svg><span class="n" style="left:34.5px">3</span></div>
<div class="pill" style="left:1853.0px;top:1360.13px"><svg><use href="#aa"/></svg><span class="n" style="left:32px">1</span></div>
<div class="pill pk" style="left:1920.5px;top:1360.13px"><svg><use href="#wf"/></svg><span class="n" style="left:32.4px">1</span></div>
<div class="pill" style="left:1988.0px;top:1360.13px"><svg><use href="#ppl"/></svg><span class="n" style="left:32.9px">1</span></div>
<span class="c" style="left:2122px;top:1363.93px">26-Jun-2020</span>
<span class="c od" style="left:2263.5px;top:1363.93px">922</span>
<span class="c" style="left:2577.5px;top:1363.93px">For Information Only</span>
<span class="c" style="left:2776.5px;top:1363.93px">19-Jun-2020</span>
<span class="c" style="left:2906px;top:1363.93px">Gordon Williams, <span class="org" style="position:static">NBC</span></span>
<span class="c" style="left:3092.5px;top:1363.93px">18-Jun-2020</span>
<span class="c" style="left:3224.5px;top:1363.93px">Gordon Williams, <span class="org" style="position:static">NBC</span></span>
<span class="c" style="left:3412px;top:1363.93px">Document Transmittal</span>
<span class="c" style="left:3627.5px;top:1363.93px">18</span>
<svg style="left:3744px;top:1361.13px;width:21px;height:24px;color:#BABABA"><use href="#bm"/></svg>
<div class="row" style="top:1399.99px"></div>
<span class="c dn" style="left:96px;top:1411.99px">SC198-DT-STL-WP203-0016</span>
<span class="c ti" style="left:460px;top:1408.99px">General Arrangement - Ground Floor Electrical</span>
<span class="c" style="left:1082.5px;top:1411.99px">WP203</span>
<span class="c" style="left:1219px;top:1411.99px">Southa</span>
<span class="c" style="left:1334.5px;top:1411.99px">Net's</span>
<span class="st dr" style="left:1461px;top:1408.79px">REJECTED.</span>
<div class="pill" style="left:1650.5px;top:1408.19px"><svg style="color:#2D8FD9"><use href="#clip"/></svg><span class="n" style="left:31.3px">2</span></div>
<div class="pill" style="left:1718.0px;top:1408.19px"><svg style="left:8.5px;top:9.5px;width:19.5px;height:15.5px"><use href="#mail"/></svg><span class="n" style="left:34.5px">1</span></div>
<div class="pill" style="left:1853.0px;top:1408.19px"><svg><use href="#aa"/></svg><span class="n" style="left:32px">2</span></div>
<div class="pill" style="left:1920.5px;top:1408.19px"><svg><use href="#wf"/></svg><span class="n" style="left:32.4px">1</span></div>
<div class="pill" style="left:1988.0px;top:1408.19px"><svg><use href="#ppl"/></svg><span class="n" style="left:32.9px">1</span></div>
<span class="c" style="left:2122px;top:1411.99px">19-Jun-2020</span>
<span class="c" style="left:2577.5px;top:1411.99px">For Review &amp; Comment</span>
<span class="c" style="left:2776.5px;top:1411.99px">18-Jun-2020</span>
<span class="c" style="left:2906px;top:1411.99px">Jane Smith, <span class="org" style="position:static">STL</span></span>
<span class="c" style="left:3092.5px;top:1411.99px">18-Jun-2020</span>
<span class="c" style="left:3224.5px;top:1411.99px">Jane Smith, <span class="org" style="position:static">STL</span></span>
<span class="c" style="left:3412px;top:1411.99px">Document Transmittal</span>
<span class="c" style="left:3627.5px;top:1411.99px">16</span>
<svg style="left:3744px;top:1409.19px;width:21px;height:24px;color:#BABABA"><use href="#bm"/></svg>
<div class="row" style="top:1448.06px"></div>
<span class="c dn" style="left:96px;top:1460.06px">SC198-DT-PBE-WP203-0014</span>
<span class="c ti" style="left:460px;top:1457.06px">Re Submission_2 for HVAC Ground Floor Layouts and Details</span>
<span class="c" style="left:1082.5px;top:1460.06px">WP203</span>
<span class="c" style="left:1219px;top:1460.06px">Parsons</span>
<span class="c" style="left:1334.5px;top:1460.06px">Net's</span>
<span class="st iss" style="left:1461px;top:1456.86px">ISSUED</span>
<div class="pill" style="left:1650.5px;top:1456.26px"><svg style="color:#2D8FD9"><use href="#clip"/></svg><span class="n" style="left:31.3px">1</span></div>
<div class="pill" style="left:1718.0px;top:1456.26px"><svg style="left:8.5px;top:9.5px;width:19.5px;height:15.5px"><use href="#mail"/></svg><span class="n" style="left:34.5px">1</span></div>
<div class="pill" style="left:1853.0px;top:1456.26px"><svg><use href="#aa"/></svg><span class="n" style="left:32px">10</span></div>
<span class="c" style="left:2577.5px;top:1460.06px">DT Response to a rev&#8230;</span>
<span class="c" style="left:2776.5px;top:1460.06px">18-Jun-2020</span>
<span class="c" style="left:2906px;top:1460.06px">Marianne Jones, <span class="org" style="position:static">PBE</span></span>
<span class="c" style="left:3092.5px;top:1460.06px">18-Jun-2020</span>
<span class="c" style="left:3224.5px;top:1460.06px">Marianne Jones, <span class="org" style="position:static">PBE</span></span>
<span class="c" style="left:3412px;top:1460.06px">Document Transmittal</span>
<span class="c" style="left:3627.5px;top:1460.06px">14</span>
<svg style="left:3744px;top:1457.26px;width:21px;height:24px;color:#BABABA"><use href="#bm"/></svg>
<div class="row" style="top:1496.12px"></div>
<svg style="left:45.9px;top:1506.32px;width:24.6px;height:22.5px"><use href="#alert"/></svg>
<span class="c dn" style="left:96px;top:1508.12px">SC198-DT-NBC-WP203-0013</span>
<span class="c ti" style="left:460px;top:1505.12px">Re Submission_2 for HVAC Ground Floor Layouts and Details</span>
<span class="c" style="left:1082.5px;top:1508.12px">WP203</span>
<span class="c" style="left:1219px;top:1508.12px">Net's</span>
<span class="c" style="left:1334.5px;top:1508.12px">Parsons</span>
<span class="st iss" style="left:1461px;top:1504.9199999999998px">ISSUED</span>
<div class="pill" style="left:1650.5px;top:1504.32px"><svg style="color:#2D8FD9"><use href="#clip"/></svg><span class="n" style="left:31.3px">1</span></div>
<div class="pill" style="left:1718.0px;top:1504.32px"><svg style="left:8.5px;top:9.5px;width:19.5px;height:15.5px"><use href="#mail"/></svg><span class="n" style="left:34.5px">2</span></div>
<div class="pill" style="left:1853.0px;top:1504.32px"><svg><use href="#aa"/></svg><span class="n" style="left:32px">6</span></div>
<div class="pill" style="left:1988.0px;top:1504.32px"><svg><use href="#ppl"/></svg><span class="n" style="left:32.9px">1</span></div>
<span class="c" style="left:2122px;top:1508.12px">30-Jun-2020</span>
<span class="c od" style="left:2263.5px;top:1508.12px">918</span>
<span class="c" style="left:2577.5px;top:1508.12px">For Review &amp; Comment</span>
<span class="c" style="left:2776.5px;top:1508.12px">18-Jun-2020</span>
<span class="c" style="left:2906px;top:1508.12px">Gordon Williams, <span class="org" style="position:static">NBC</span></span>
<span class="c" style="left:3092.5px;top:1508.12px">18-Jun-2020</span>
<span class="c" style="left:3224.5px;top:1508.12px">Gordon Williams, <span class="org" style="position:static">NBC</span></span>
<span class="c" style="left:3412px;top:1508.12px">Document Transmittal</span>
<span class="c" style="left:3627.5px;top:1508.12px">13</span>
<svg style="left:3744px;top:1505.32px;width:21px;height:24px;color:#BABABA"><use href="#bm"/></svg>
<div class="row" style="top:1544.19px"></div>
<svg style="left:45.9px;top:1554.39px;width:24.6px;height:22.5px"><use href="#alert"/></svg>
<span class="c dn" style="left:96px;top:1556.19px">SC198-DT-STL-WP203-0012</span>
<span class="c ti" style="left:460px;top:1553.19px">HVAC Ground Floor Layouts and Details</span>
<span class="c" style="left:1082.5px;top:1556.19px">WP203</span>
<span class="c" style="left:1219px;top:1556.19px">Southa</span>
<span class="c" style="left:1334.5px;top:1556.19px">Net's</span>
<span class="st iss" style="left:1461px;top:1552.99px">ISSUED</span>
<div class="pill" style="left:1650.5px;top:1552.39px"><svg style="color:#2D8FD9"><use href="#clip"/></svg><span class="n" style="left:31.3px">1</span></div>
<div class="pill" style="left:1718.0px;top:1552.39px"><svg style="left:8.5px;top:9.5px;width:19.5px;height:15.5px"><use href="#mail"/></svg><span class="n" style="left:34.5px">2</span></div>
<div class="pill" style="left:1853.0px;top:1552.39px"><svg><use href="#aa"/></svg><span class="n" style="left:32px">6</span></div>
<div class="pill" style="left:1988.0px;top:1552.39px"><svg><use href="#ppl"/></svg><span class="n" style="left:32.9px">1</span></div>
<span class="c" style="left:2122px;top:1556.19px">24-Jun-2020</span>
<span class="c od" style="left:2263.5px;top:1556.19px">924</span>
<span class="c" style="left:2577.5px;top:1556.19px">For Review &amp; Comment</span>
<span class="c" style="left:2776.5px;top:1556.19px">18-Jun-2020</span>
<span class="c" style="left:2906px;top:1556.19px">Jane Smith, <span class="org" style="position:static">STL</span></span>
<span class="c" style="left:3092.5px;top:1556.19px">17-Jun-2020</span>
<span class="c" style="left:3224.5px;top:1556.19px">Jane Smith, <span class="org" style="position:static">STL</span></span>
<span class="c" style="left:3412px;top:1556.19px">Document Transmittal</span>
<span class="c" style="left:3627.5px;top:1556.19px">12</span>
<svg style="left:3744px;top:1553.39px;width:21px;height:24px;color:#BABABA"><use href="#bm"/></svg>
<div class="row" style="top:1592.25px"></div>
<span class="c dn" style="left:96px;top:1604.25px">SC198-DT-NBC-WP203-0011</span>
<span class="c ti" style="left:460px;top:1601.25px">HVAC Ground Floor Layouts and Details</span>
<span class="c" style="left:1082.5px;top:1604.25px">WP203</span>
<span class="c" style="left:1219px;top:1604.25px">Net's</span>
<span class="c" style="left:1334.5px;top:1604.25px">Southa</span>
<span class="st iss" style="left:1461px;top:1601.05px">ISSUED</span>
<div class="pill" style="left:1650.5px;top:1600.45px"><svg style="color:#2D8FD9"><use href="#clip"/></svg><span class="n" style="left:31.3px">1</span></div>
<div class="pill" style="left:1718.0px;top:1600.45px"><svg style="left:8.5px;top:9.5px;width:19.5px;height:15.5px"><use href="#mail"/></svg><span class="n" style="left:34.5px">1</span></div>
<div class="pill" style="left:1853.0px;top:1600.45px"><svg><use href="#aa"/></svg><span class="n" style="left:32px">11</span></div>
<span class="c" style="left:2577.5px;top:1604.25px">DT Response to a rev&#8230;</span>
<span class="c" style="left:2776.5px;top:1604.25px">17-Jun-2020</span>
<span class="c" style="left:2906px;top:1604.25px">Gordon Williams, <span class="org" style="position:static">NBC</span></span>
<span class="c" style="left:3092.5px;top:1604.25px">17-Jun-2020</span>
<span class="c" style="left:3224.5px;top:1604.25px">Gordon Williams, <span class="org" style="position:static">NBC</span></span>
<span class="c" style="left:3412px;top:1604.25px">Document Transmittal</span>
<span class="c" style="left:3627.5px;top:1604.25px">11</span>
<svg style="left:3744px;top:1601.45px;width:21px;height:24px;color:#BABABA"><use href="#bm"/></svg>
<div class="row" style="top:1640.32px"></div>
<span class="c dn" style="left:96px;top:1652.32px">SC198-DT-PBE-WP203-0010</span>
<span class="c ti" style="left:460px;top:1649.32px">HVAC Ground Floor Layouts and Details</span>
<span class="c" style="left:1082.5px;top:1652.32px">WP203</span>
<span class="c" style="left:1219px;top:1652.32px">Parsons</span>
<span class="c" style="left:1334.5px;top:1652.32px">Net's</span>
<span class="st iss" style="left:1461px;top:1649.12px">ISSUED</span>
<div class="pill" style="left:1650.5px;top:1648.52px"><svg style="color:#2D8FD9"><use href="#clip"/></svg><span class="n" style="left:31.3px">1</span></div>
<div class="pill" style="left:1718.0px;top:1648.52px"><svg style="left:8.5px;top:9.5px;width:19.5px;height:15.5px"><use href="#mail"/></svg><span class="n" style="left:34.5px">1</span></div>
<div class="pill" style="left:1853.0px;top:1648.52px"><svg><use href="#aa"/></svg><span class="n" style="left:32px">11</span></div>
<span class="c" style="left:2577.5px;top:1652.32px">DT Response to a rev&#8230;</span>
<span class="c" style="left:2776.5px;top:1652.32px">17-Jun-2020</span>
<span class="c" style="left:2906px;top:1652.32px">Marianne Jones, <span class="org" style="position:static">PBE</span></span>
<span class="c" style="left:3092.5px;top:1652.32px">17-Jun-2020</span>
<span class="c" style="left:3224.5px;top:1652.32px">Marianne Jones, <span class="org" style="position:static">PBE</span></span>
<span class="c" style="left:3412px;top:1652.32px">Document Transmittal</span>
<span class="c" style="left:3627.5px;top:1652.32px">10</span>
<svg style="left:3744px;top:1649.52px;width:21px;height:24px;color:#BABABA"><use href="#bm"/></svg>
<div class="row" style="top:1688.38px"></div>
<svg style="left:45.9px;top:1698.5800000000002px;width:24.6px;height:22.5px"><use href="#alert"/></svg>
<span class="c dn" style="left:96px;top:1700.38px">SC198-DT-NBC-WP203-0009</span>
<span class="c ti" style="left:460px;top:1697.38px">Re Submission for HVAC Ground Floor Layouts and Details</span>
<span class="c" style="left:1082.5px;top:1700.38px">WP203</span>
<span class="c" style="left:1219px;top:1700.38px">Net's</span>
<span class="c" style="left:1334.5px;top:1700.38px">Parsons</span>
<span class="st iss" style="left:1461px;top:1697.18px">ISSUED</span>
<div class="pill" style="left:1650.5px;top:1696.5800000000002px"><svg style="color:#2D8FD9"><use href="#clip"/></svg><span class="n" style="left:31.3px">1</span></div>
<div class="pill" style="left:1718.0px;top:1696.5800000000002px"><svg style="left:8.5px;top:9.5px;width:19.5px;height:15.5px"><use href="#mail"/></svg><span class="n" style="left:34.5px">2</span></div>
<div class="pill" style="left:1853.0px;top:1696.5800000000002px"><svg><use href="#aa"/></svg><span class="n" style="left:32px">6</span></div>
<div class="pill" style="left:1988.0px;top:1696.5800000000002px"><svg><use href="#ppl"/></svg><span class="n" style="left:32.9px">1</span></div>
<span class="c" style="left:2122px;top:1700.38px">23-Jun-2020</span>
<span class="c od" style="left:2263.5px;top:1700.38px">925</span>
<span class="c" style="left:2577.5px;top:1700.38px">For Review &amp; Comment</span>
<span class="c" style="left:2776.5px;top:1700.38px">16-Jun-2020</span>
<span class="c" style="left:2906px;top:1700.38px">Gordon Williams, <span class="org" style="position:static">NBC</span></span>
<span class="c" style="left:3092.5px;top:1700.38px">16-Jun-2020</span>
<span class="c" style="left:3224.5px;top:1700.38px">Gordon Williams, <span class="org" style="position:static">NBC</span></span>
<span class="c" style="left:3412px;top:1700.38px">Document Transmittal</span>
<span class="c" style="left:3627.5px;top:1700.38px">9</span>
<svg style="left:3744px;top:1697.5800000000002px;width:21px;height:24px;color:#BABABA"><use href="#bm"/></svg>
<div class="row" style="top:1736.45px"></div>
<svg style="left:45.9px;top:1746.65px;width:24.6px;height:22.5px"><use href="#alert"/></svg>
<span class="c dn" style="left:96px;top:1748.45px">SC198-DT-STL-WP203-0008</span>
<span class="c ti" style="left:460px;top:1745.45px">Re Submission for HVAC Ground Floor Layouts and Details</span>
<span class="c" style="left:1082.5px;top:1748.45px">WP203</span>
<span class="c" style="left:1219px;top:1748.45px">Southa</span>
<span class="c" style="left:1334.5px;top:1748.45px">Net's</span>
<span class="st iss" style="left:1461px;top:1745.25px">ISSUED</span>
<div class="pill" style="left:1650.5px;top:1744.65px"><svg style="color:#2D8FD9"><use href="#clip"/></svg><span class="n" style="left:31.3px">1</span></div>
<div class="pill" style="left:1718.0px;top:1744.65px"><svg style="left:8.5px;top:9.5px;width:19.5px;height:15.5px"><use href="#mail"/></svg><span class="n" style="left:34.5px">2</span></div>
<div class="pill" style="left:1853.0px;top:1744.65px"><svg><use href="#aa"/></svg><span class="n" style="left:32px">6</span></div>
<div class="pill" style="left:1988.0px;top:1744.65px"><svg><use href="#ppl"/></svg><span class="n" style="left:32.9px">1</span></div>
<span class="c" style="left:2122px;top:1748.45px">23-Jun-2020</span>
<span class="c od" style="left:2263.5px;top:1748.45px">925</span>
<span class="c" style="left:2577.5px;top:1748.45px">For Review &amp; Comment</span>
<span class="c" style="left:2776.5px;top:1748.45px">16-Jun-2020</span>
<span class="c" style="left:2906px;top:1748.45px">Jane Smith, <span class="org" style="position:static">STL</span></span>
<span class="c" style="left:3092.5px;top:1748.45px">16-Jun-2020</span>
<span class="c" style="left:3224.5px;top:1748.45px">Jane Smith, <span class="org" style="position:static">STL</span></span>
<span class="c" style="left:3412px;top:1748.45px">Document Transmittal</span>
<span class="c" style="left:3627.5px;top:1748.45px">8</span>
<svg style="left:3744px;top:1745.65px;width:21px;height:24px;color:#BABABA"><use href="#bm"/></svg>
<div class="row" style="top:1784.51px"></div>
<span class="c dn" style="left:96px;top:1796.51px">SC198-DT-NBC-WP203-0007</span>
<span class="c ti" style="left:460px;top:1793.51px">HVAC Ground Floor Layouts and Details</span>
<span class="c" style="left:1082.5px;top:1796.51px">WP203</span>
<span class="c" style="left:1219px;top:1796.51px">Net's</span>
<span class="c" style="left:1334.5px;top:1796.51px">Southa</span>
<span class="st iss" style="left:1461px;top:1793.31px">ISSUED</span>
<div class="pill" style="left:1650.5px;top:1792.71px"><svg style="color:#2D8FD9"><use href="#clip"/></svg><span class="n" style="left:31.3px">1</span></div>
<div class="pill" style="left:1718.0px;top:1792.71px"><svg style="left:8.5px;top:9.5px;width:19.5px;height:15.5px"><use href="#mail"/></svg><span class="n" style="left:34.5px">1</span></div>
<div class="pill" style="left:1853.0px;top:1792.71px"><svg><use href="#aa"/></svg><span class="n" style="left:32px">12</span></div>
<span class="c" style="left:2577.5px;top:1796.51px">DT Response to a rev&#8230;</span>
<span class="c" style="left:2776.5px;top:1796.51px">16-Jun-2020</span>
<span class="c" style="left:2906px;top:1796.51px">Gordon Williams, <span class="org" style="position:static">NBC</span></span>
<span class="c" style="left:3092.5px;top:1796.51px">16-Jun-2020</span>
<span class="c" style="left:3224.5px;top:1796.51px">Gordon Williams, <span class="org" style="position:static">NBC</span></span>
<span class="c" style="left:3412px;top:1796.51px">Document Transmittal</span>
<span class="c" style="left:3627.5px;top:1796.51px">7</span>
<svg style="left:3744px;top:1793.71px;width:21px;height:24px;color:#BABABA"><use href="#bm"/></svg>
<div class="row" style="top:1832.58px"></div>
<span class="c dn" style="left:96px;top:1844.58px">SC198-DT-PBE-WP203-0006</span>
<span class="c ti" style="left:460px;top:1841.58px">HVAC Ground Floor Layouts and Details</span>
<span class="c" style="left:1082.5px;top:1844.58px">WP203</span>
<span class="c" style="left:1219px;top:1844.58px">Parsons</span>
<span class="c" style="left:1334.5px;top:1844.58px">Net's</span>
<span class="st iss" style="left:1461px;top:1841.3799999999999px">ISSUED</span>
<div class="pill" style="left:1650.5px;top:1840.78px"><svg style="color:#2D8FD9"><use href="#clip"/></svg><span class="n" style="left:31.3px">1</span></div>
<div class="pill" style="left:1718.0px;top:1840.78px"><svg style="left:8.5px;top:9.5px;width:19.5px;height:15.5px"><use href="#mail"/></svg><span class="n" style="left:34.5px">1</span></div>
<div class="pill" style="left:1853.0px;top:1840.78px"><svg><use href="#aa"/></svg><span class="n" style="left:32px">12</span></div>
<span class="c" style="left:2577.5px;top:1844.58px">DT Response to a rev&#8230;</span>
<span class="c" style="left:2776.5px;top:1844.58px">15-Jun-2020</span>
<span class="c" style="left:2906px;top:1844.58px">Gordon Williams, <span class="org" style="position:static">NBC</span></span>
<span class="c" style="left:3092.5px;top:1844.58px">15-Jun-2020</span>
<span class="c" style="left:3224.5px;top:1844.58px">Marianne Jones, <span class="org" style="position:static">PBE</span></span>
<span class="c" style="left:3412px;top:1844.58px">Document Transmittal</span>
<span class="c" style="left:3627.5px;top:1844.58px">6</span>
<svg style="left:3744px;top:1841.78px;width:21px;height:24px;color:#BABABA"><use href="#bm"/></svg>
</div>

<div style="position:absolute;left:0;top:533px;width:3840px;height:1946px;overflow:hidden;pointer-events:none">
<div style="position:absolute;left:20px;top:1863.5px;width:3787px;height:40px;background:#fff"></div>
<div style="position:absolute;left:3807px;top:683px;width:13px;height:1038px;border-radius:6px 6px 6px 6px;background:#A9A9A9"></div>
<div style="position:absolute;left:3807px;top:1883px;width:13px;height:30px;background:#fff"></div>
<div style="position:absolute;left:0;top:1893px;width:3840px;height:60px;background:#29A8E0;box-shadow:0 -2px 8px rgba(0,0,0,.08)"></div>
<span style="position:absolute;left:0;top:1908px;width:3840px;text-align:center;font-size:18.9px;line-height:24px;color:#fff;white-space:nowrap;-webkit-text-stroke:0.3px #fff">You are no longer following Document SC198-DT-NBC-WSA-002-0037</span>
<div style="position:absolute;left:3747.5px;top:1854.5px;width:65px;height:65px;border-radius:33px;background:#29A8E0;box-shadow:0 2px 14px rgba(0,0,0,.22)"></div>
<svg style="position:absolute;left:3765px;top:1870px;width:31px;height:36px" viewBox="0 0 31 36"><path d="M4 0 H27 Q31 0 31 4 V36 L22 31 H4 Q0 31 0 27 V4 Q0 0 4 0 Z" fill="#fff"/><path d="M5 21.5 Q15.5 28 26 21.5" fill="none" stroke="#29A8E0" stroke-width="2"/></svg>
<svg style="position:absolute;left:3802px;top:1916px;width:16px;height:16px" viewBox="0 0 16 16"><path d="M3 3 L13 13 M13 3 L3 13" stroke="#8ED3F2" stroke-width="4.2" stroke-linecap="round"/></svg>
</div>

<svg style="position:absolute;left:0;top:0;width:3843px;height:2479px;pointer-events:none" viewBox="0 0 3843 2479">
<defs><filter id="sh" x="-20%" y="-20%" width="140%" height="140%"><feGaussianBlur in="SourceAlpha" stdDeviation="2.5"/><feOffset dx="2.5" dy="3" result="b"/><feComponentTransfer><feFuncA type="linear" slope=".55"/></feComponentTransfer><feMerge><feMergeNode/><feMergeNode in="SourceGraphic"/></feMerge></filter></defs>
<g filter="url(#sh)" fill="#F4A80B" stroke="none">
<path d="M3760 436 L3765 880" stroke="#F4A80B" stroke-width="10.5" stroke-linecap="round" fill="none"/>
<path d="M3751 878 L3780.5 878 L3766 907.5 Z"/>
<path d="M3729 958 L2216 2421" stroke="#F4A80B" stroke-width="12" stroke-linecap="round" fill="none"/>
<path d="M2212.3 2405 L2232.7 2425.5 L2201.4 2435.5 Z"/>
</g></svg>
</body></html>
